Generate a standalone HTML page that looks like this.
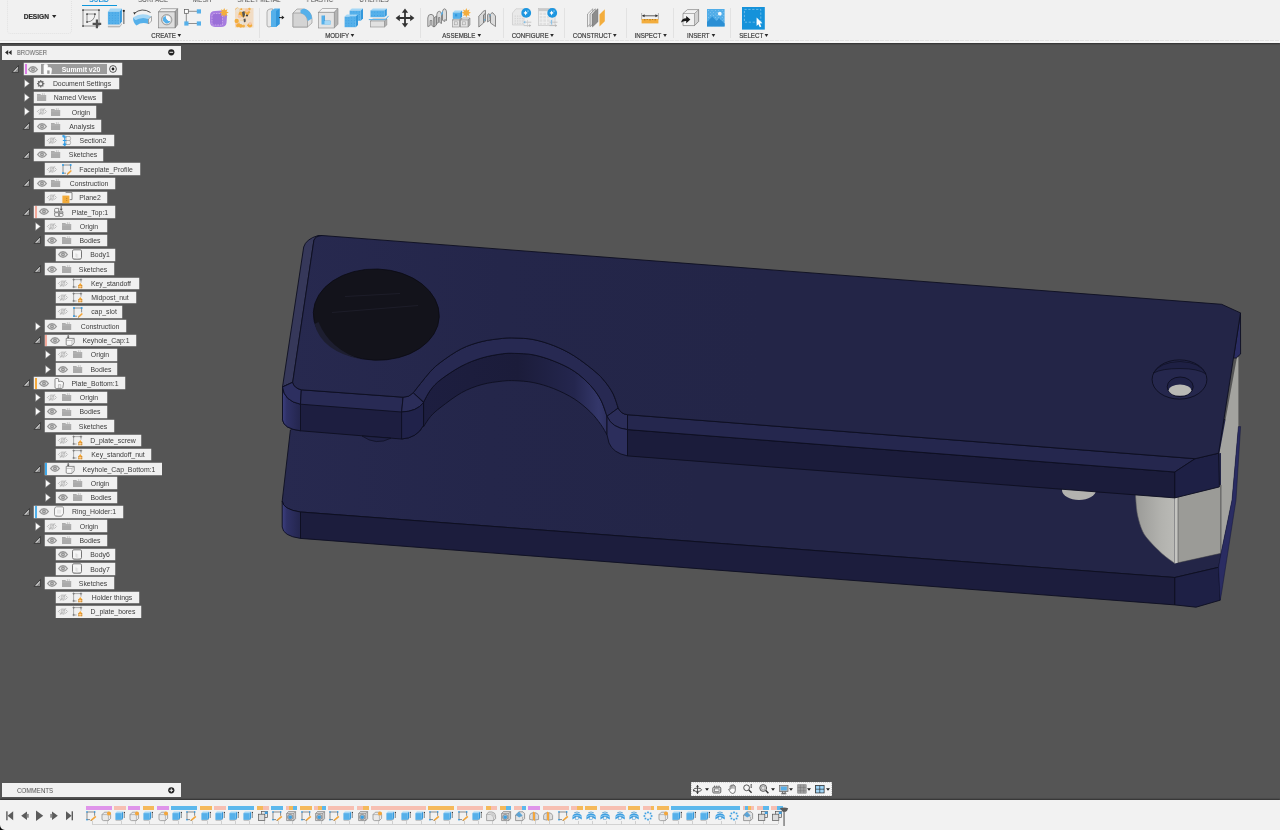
<!DOCTYPE html>
<html lang="en"><head><meta charset="utf-8"><title>Summit v20 - Design</title>
<style>
html,body{margin:0;padding:0}
body{width:1280px;height:830px;overflow:hidden;background:#555555;position:relative;font-family:"Liberation Sans",sans-serif;}
.abs{position:absolute}
svg{overflow:visible}
.tl,.rt,.ptxt,.tab{will-change:transform}
.model{position:absolute;left:0;top:0}
#topbar{position:absolute;left:0;top:0;width:1280px;height:42.8px;background:#f1f1f1;box-shadow:0 1px 1.5px rgba(0,0,0,.45)}
#bottombar{position:absolute;left:0;top:800px;width:1280px;height:30px;background:#f2f2f2;box-shadow:0 -1px 1.5px rgba(0,0,0,.45)}

.tl{-webkit-text-stroke:.2px currentColor;position:absolute;width:120px;height:10px;line-height:10px;text-align:center;white-space:nowrap}
.tli{display:inline-block;transform-origin:50% 50%}
.dd{display:inline-block;margin-left:2.2px;vertical-align:1.5px}
.tab{position:absolute;top:-4.3px;width:80px;text-align:center;font-size:7.2px;line-height:8px;white-space:nowrap;transform:scaleX(.88)}

.panel{position:absolute;background:#f1f1f1}
.ptxt{position:absolute;font-size:6.9px;line-height:10px;color:#5c5c5c;transform:scaleX(.84);transform-origin:0 50%;white-space:nowrap}
.rb{position:absolute;height:11.6px;background:#f0f0f0;box-shadow:0 0 0 .3px #d0d0d0}
.rt{position:absolute;width:100px;text-align:center;font-size:6.9px;line-height:10px;color:#3b3b3b;white-space:nowrap}
</style></head>
<body>
<svg class="model" width="1280" height="830" viewBox="0 0 1280 830">
<defs>
<linearGradient id="gTop" gradientUnits="userSpaceOnUse" x1="290" y1="0" x2="760" y2="0"><stop offset="0" stop-color="#27294f"/><stop offset="0.45" stop-color="#24264a"/><stop offset="1" stop-color="#232547"/></linearGradient>
<linearGradient id="gBot" gradientUnits="userSpaceOnUse" x1="282" y1="0" x2="700" y2="0"><stop offset="0" stop-color="#27294f"/><stop offset="0.5" stop-color="#24264a"/><stop offset="1" stop-color="#232547"/></linearGradient>
<linearGradient id="gCorner" gradientUnits="userSpaceOnUse" x1="282" y1="0" x2="301" y2="0"><stop offset="0" stop-color="#3e4182"/><stop offset="0.25" stop-color="#2f3166"/><stop offset="1" stop-color="#23254c"/></linearGradient>
<linearGradient id="gArch" gradientUnits="userSpaceOnUse" x1="423" y1="0" x2="612" y2="0"><stop offset="0" stop-color="#1d1e40"/><stop offset="0.5" stop-color="#1b1c3a"/><stop offset="0.8" stop-color="#24264e"/><stop offset="0.93" stop-color="#34376a"/><stop offset="1" stop-color="#2a2c58"/></linearGradient>
<linearGradient id="gGray" gradientUnits="userSpaceOnUse" x1="1135" y1="0" x2="1178" y2="0"><stop offset="0" stop-color="#9a9a97"/><stop offset="0.6" stop-color="#b2b2ae"/><stop offset="1" stop-color="#bcbcb8"/></linearGradient>
</defs>
<path d="M290.4 430 L282.2 501 Q282.6 509.5 300.5 512 L1174.8 577.5 L1218.6 567.3 L1232 500 L1238 430 L1200 400 L640 330 L400 330 Z" fill="url(#gBot)" stroke="#0d0e20" stroke-width="0.9" stroke-linejoin="round"/>
<path d="M282.2 501 L282.2 527 Q283 536 300.5 538.4 L300.5 512 Q283 509.5 282.2 501Z" fill="url(#gCorner)" stroke="#0d0e20" stroke-width="0.9" stroke-linejoin="round"/>
<polygon points="300.5,512.0 1174.8,577.5 1174.8,604.9 300.5,538.4" fill="#1c1d3d" stroke="#0d0e20" stroke-width="0.9" stroke-linejoin="round"/>
<polygon points="1174.8,577.5 1218.6,567.3 1220.2,600.2 1196.0,607.2 1174.8,604.9" fill="#1e2045" stroke="#0d0e20" stroke-width="0.9" stroke-linejoin="round"/>
<path d="M1135.6 494 L1135.6 497 C1135.9 500.0 1136.3 509.3 1137.5 515.0 C1138.7 520.7 1140.6 527.0 1142.6 531.3 C1144.6 535.6 1146.9 537.9 1149.5 541.0 C1152.1 544.1 1155.5 547.4 1158.3 550.1 C1161.0 552.8 1163.2 554.8 1166.0 557.0 C1168.8 559.2 1173.3 562.3 1174.8 563.4 L1174.8 495 Z" fill="url(#gGray)" stroke="#55555a" stroke-width="0.6"/>
<polygon points="1174.8,495.0 1178.0,495.0 1178.0,562.8 1174.8,563.4" fill="#c4c4c0"/>
<polygon points="1178.0,485.0 1221.0,485.0 1221.0,553.3 1178.0,562.8" fill="#9b9b97" stroke="#3c3c40" stroke-width="0.5"/>
<polygon points="1237.0,357.0 1238.4,357.0 1238.4,426.6 1232.0,500.0 1221.0,553.3 1221.0,453.0 1219.4,453.2" fill="#a3a39f"/>
<line x1="1221" y1="485" x2="1221" y2="553" stroke="#3c3c40" stroke-width="0.6"/>
<ellipse cx="1079" cy="490" rx="17" ry="10" fill="#b3b3af"/>
<polygon points="1238.4,426.6 1240.6,426.6 1236.0,500.0 1221.4,594.0 1220.2,600.2 1218.6,567.3 1221.0,553.3 1232.0,500.0" fill="#2a2c62" stroke="#15163a" stroke-width="0.5"/>
<path d="M303.7 247 Q306 239 318 235.6 L322 235.6 Q315 236.5 313.9 240.4 L292.7 382.3 L282.5 387 Z" fill="#36385a" stroke="#0d0e20" stroke-width="0.9" stroke-linejoin="round"/>
<path d="M282.5 387 L282.5 419.9 Q283.5 428.5 300.5 430.8 L401.6 439 Q417 438 423.5 425.4 L423.5 402.6 L414 393 L301 389 L292.7 382.3Z" fill="#1d1e40" stroke="#0d0e20" stroke-width="0.9" stroke-linejoin="round"/>
<path d="M282.5 387 L282.5 419.9 Q283.5 428.5 300.5 430.8 L300.5 404.2 Q284 401 282.5 387Z" fill="url(#gCorner)" stroke="#0d0e20" stroke-width="0.9" stroke-linejoin="round"/>
<path d="M282.5 387 L292.7 382.3 Q294 388 301.3 389.8 L300.5 404.2 Q284 401 282.5 387Z" fill="#2d2f60" stroke="#0d0e20" stroke-width="0.9" stroke-linejoin="round"/>
<polygon points="301.3,389.8 403.1,397.2 401.6,412.0 300.5,404.2" fill="#282a54" stroke="#0d0e20" stroke-width="0.9" stroke-linejoin="round"/>
<path d="M403.1 397.2 Q409 397.5 413.3 392.7 L423.5 402.6 Q417 411.5 401.6 412Z" fill="#2b2d59" stroke="#0d0e20" stroke-width="0.9" stroke-linejoin="round"/>
<path d="M401.6 412 Q417 411.5 423.5 402.6 L423.5 425.4 Q417 438 401.6 439Z" fill="#20224a" stroke="#0d0e20" stroke-width="0.9" stroke-linejoin="round"/>
<path d="M423.6 402.0 C424.8 399.9 427.8 393.5 430.7 389.7 C433.6 385.9 435.9 383.3 441.0 379.4 C446.1 375.5 454.7 369.7 461.5 366.1 C468.3 362.5 475.2 359.9 482.0 357.9 C488.8 355.8 497.0 354.6 502.5 353.8 C508.0 353.1 509.7 353.2 514.8 353.4 C519.9 353.6 526.7 353.5 533.2 354.8 C539.7 356.1 546.9 358.3 553.7 361.0 C560.5 363.7 568.1 367.1 574.2 371.2 C580.4 375.3 586.2 380.8 590.6 385.6 C595.0 390.4 598.1 394.8 600.8 399.9 C603.5 405.0 606.0 413.6 607.0 416.3 L607.0 434.8 C606.0 433.1 603.5 428.3 600.8 424.5 C598.1 420.7 595.0 416.5 590.6 412.2 C586.2 407.9 580.4 402.8 574.2 398.9 C568.1 395.0 560.5 391.3 553.7 388.6 C546.9 385.9 539.7 383.8 533.2 382.5 C526.7 381.2 519.9 380.9 514.8 380.7 C509.7 380.5 508.0 380.5 502.5 381.1 C497.0 381.7 488.8 382.6 482.0 384.5 C475.2 386.4 468.3 388.9 461.5 392.7 C454.7 396.5 446.1 403.2 441.0 407.1 C435.9 411.0 433.6 413.1 430.7 416.3 C427.8 419.6 424.8 424.9 423.6 426.6 Z" fill="url(#gArch)" stroke="#0d0e20" stroke-width="0.9" stroke-linejoin="round"/>
<path d="M413.3 392.7 C414.5 391.2 417.6 387.1 420.5 383.5 C423.4 379.9 427.3 374.8 430.7 371.2 C434.1 367.6 435.9 365.8 441.0 362.0 C446.1 358.2 454.7 352.1 461.5 348.7 C468.3 345.3 475.2 343.2 482.0 341.5 C488.8 339.8 497.0 339.0 502.5 338.4 C508.0 337.8 509.7 337.8 514.8 338.0 C519.9 338.2 526.7 338.2 533.2 339.5 C539.7 340.8 546.9 342.9 553.7 345.6 C560.5 348.3 567.4 351.6 574.2 355.9 C581.0 360.2 589.6 366.9 594.7 371.2 C599.8 375.5 601.8 377.7 604.9 381.5 C608.0 385.3 610.9 389.4 613.1 393.8 C615.3 398.2 617.4 405.7 618.2 408.1 L607.0 416.3 C606.0 413.6 603.5 405.0 600.8 399.9 C598.1 394.8 595.0 390.4 590.6 385.6 C586.2 380.8 580.4 375.3 574.2 371.2 C568.1 367.1 560.5 363.7 553.7 361.0 C546.9 358.3 539.7 356.1 533.2 354.8 C526.7 353.5 519.9 353.6 514.8 353.4 C509.7 353.2 508.0 353.1 502.5 353.8 C497.0 354.6 488.8 355.8 482.0 357.9 C475.2 359.9 468.3 362.5 461.5 366.1 C454.7 369.7 446.1 375.5 441.0 379.4 C435.9 383.3 433.6 385.9 430.7 389.7 C427.8 393.5 424.8 399.9 423.6 402.0 Z" fill="#272952" stroke="#0d0e20" stroke-width="0.9" stroke-linejoin="round"/>
<path d="M618.2 408.1 Q621 414 627.5 414.7 L627.5 429.6 Q612 428 607 416.3Z" fill="#2b2d59" stroke="#0d0e20" stroke-width="0.9" stroke-linejoin="round"/>
<path d="M607 416.3 Q612 428 627.5 429.6 L627.5 455.9 Q613 453 609 443 L607 434.8Z" fill="#2c2e5c" stroke="#0d0e20" stroke-width="0.9" stroke-linejoin="round"/>
<polygon points="627.5,429.6 1174.8,472.0 1174.8,497.9 627.5,455.9" fill="#1b1c3b" stroke="#0d0e20" stroke-width="0.9" stroke-linejoin="round"/>
<polygon points="627.5,414.7 1195.1,458.7 1174.8,472.0 627.5,429.6" fill="#25274e" stroke="#0d0e20" stroke-width="0.9" stroke-linejoin="round"/>
<polygon points="1174.8,472.0 1195.1,458.7 1218.6,453.2 1219.4,486.9 1174.8,497.9" fill="#1e2045" stroke="#0d0e20" stroke-width="0.9" stroke-linejoin="round"/>
<polygon points="1240.5,312.9 1240.6,354.0 1236.3,358.0 1233.5,358.0" fill="#2a2c62" stroke="#0d0e20" stroke-width="0.9" stroke-linejoin="round"/>
<path d="M313.9 240.4 Q315 236.2 322 235.5 L1221.7 304.3 L1240.5 312.9 L1218.6 453.2 L1195.1 458.7 L627.5 414.7 Q621 414 618.2 408.1 C617.4 405.7 615.3 398.2 613.1 393.8 C610.9 389.4 608.0 385.3 604.9 381.5 C601.8 377.7 599.8 375.5 594.7 371.2 C589.6 366.9 581.0 360.2 574.2 355.9 C567.4 351.6 560.5 348.3 553.7 345.6 C546.9 342.9 539.7 340.8 533.2 339.5 C526.7 338.2 519.9 338.2 514.8 338.0 C509.7 337.8 508.0 337.8 502.5 338.4 C497.0 339.0 488.8 339.8 482.0 341.5 C475.2 343.2 468.3 345.3 461.5 348.7 C454.7 352.1 446.1 358.2 441.0 362.0 C435.9 365.8 434.1 367.6 430.7 371.2 C427.3 374.8 423.4 379.9 420.5 383.5 C417.6 387.1 414.5 391.2 413.3 392.7 Q409 397.5 403.1 397.2 L301.3 389.8 Q294 388 292.7 382.3 Z" fill="url(#gTop)" stroke="#0d0e20" stroke-width="0.9" stroke-linejoin="round"/>
<ellipse cx="376.3" cy="314.6" rx="63" ry="45.6" transform="rotate(2 376.3 314.6)" fill="#13131b" stroke="#0b0b14" stroke-width="0.8"/>
<path d="M314.5 324 Q322 352 362 359.5 Q330 350 318.5 322Z" fill="#1d1e30"/>
<path d="M332 312.5 L418 305.5 M345 296.5 L400 293.5" stroke="#20202c" stroke-width=".8" fill="none"/>
<ellipse cx="1179.5" cy="379.5" rx="27.4" ry="19.6" fill="#25274d" stroke="#0d0e20" stroke-width="0.9"/>
<path d="M1153.5 373 Q1160 362 1180 361.5 Q1200 362 1206 374 Q1198 368.5 1180 368.5 Q1162 368.5 1153.5 373Z" fill="#1e2044" stroke="#0d0e20" stroke-width="0.7"/>
<ellipse cx="1180.2" cy="386.8" rx="13" ry="9.8" fill="#1f2146" stroke="#0d0e20" stroke-width="0.9"/>
<ellipse cx="1180" cy="390.2" rx="11.3" ry="5.6" fill="#b9b9b5"/>
<path d="M362 436 Q376 446 391 438.2Z" fill="#1f2145" stroke="#0d0e20" stroke-width="0.7"/>
</svg>
<div id="topbar">
<div class="abs" style="left:7px;top:-4px;width:65px;height:38px;border:1px dotted #e2e2e2;border-radius:4px;box-sizing:border-box"></div>
<div class="tl" style="left:-20px;top:12px;font-size:6.6px;color:#2e2e2e;font-weight:bold"><span class="tli" style="transform:scaleX(1)">DESIGN<svg class="dd" style="margin-left:3px" width="4.4" height="3" viewBox="0 0 4.4 3"><path d="M0 .1 H4.4 L2.2 2.9Z" fill="#2a2a2a"/></svg></span></div>
<div class="tab" style="left:58.8px;color:#1a93dc;font-weight:bold">SOLID</div>
<div class="tab" style="left:112.8px;color:#4a4a4a;font-weight:normal">SURFACE</div>
<div class="tab" style="left:162.4px;color:#4a4a4a;font-weight:normal">MESH</div>
<div class="tab" style="left:218.5px;color:#4a4a4a;font-weight:normal">SHEET METAL</div>
<div class="tab" style="left:280.3px;color:#4a4a4a;font-weight:normal">PLASTIC</div>
<div class="tab" style="left:333.8px;color:#4a4a4a;font-weight:normal">UTILITIES</div>
<div class="abs" style="left:82.1px;top:4.6px;width:35.4px;height:1.7px;background:#0d96db"></div>
<svg class="abs" style="left:81.5px;top:8.5px" width="20" height="20" viewBox="0 0 20 20"><rect x="1" y="1" width="16" height="16" fill="none" stroke="#4a4a4a" stroke-width=".6"/><path d="M5 5 H13 Q12.5 12.5 5 13Z" fill="none" stroke="#4a4a4a" stroke-width=".6"/><circle cx="1" cy="1" r="0.85" fill="#2b2b2b"/><circle cx="17" cy="1" r="0.85" fill="#2b2b2b"/><circle cx="1" cy="17" r="0.85" fill="#2b2b2b"/><circle cx="5" cy="5" r="0.85" fill="#2b2b2b"/><circle cx="13" cy="5" r="0.85" fill="#2b2b2b"/><circle cx="5" cy="13" r="0.85" fill="#2b2b2b"/><path d="M14.9 10.6 v8.6 M10.6 14.9 h8.6" stroke="#505050" stroke-width="2.2" fill="none"/></svg>
<svg class="abs" style="left:107px;top:7.5px" width="19" height="20" viewBox="0 0 19 20"><polygon points="0.9,16 14.9,16 14.9,13 12.7,19.2 0.9,19.2" fill="#e2e2e2"/><polygon points="0.9,18.2 12.7,18.2 14.9,15.6 14.9,16.6 12.7,19.3 0.9,19.3" fill="#a9a9a9"/><polygon points="0.9,3.7 3.2,0.6 14.9,0.6 12.6,3.7" fill="#a4d7f6"/><polygon points="12.6,3.7 14.9,0.6 14.9,13.4 12.6,16.5" fill="#3398dc"/><rect x="0.9" y="3.7" width="11.7" height="12.8" fill="#55b0ea"/><circle cx="2.36" cy="4.98" r=".42" fill="#2f93dc"/><circle cx="2.36" cy="7.54" r=".42" fill="#2f93dc"/><circle cx="2.36" cy="10.10" r=".42" fill="#2f93dc"/><circle cx="2.36" cy="12.66" r=".42" fill="#2f93dc"/><circle cx="2.36" cy="15.22" r=".42" fill="#2f93dc"/><circle cx="5.29" cy="4.98" r=".42" fill="#2f93dc"/><circle cx="5.29" cy="7.54" r=".42" fill="#2f93dc"/><circle cx="5.29" cy="10.10" r=".42" fill="#2f93dc"/><circle cx="5.29" cy="12.66" r=".42" fill="#2f93dc"/><circle cx="5.29" cy="15.22" r=".42" fill="#2f93dc"/><circle cx="8.21" cy="4.98" r=".42" fill="#2f93dc"/><circle cx="8.21" cy="7.54" r=".42" fill="#2f93dc"/><circle cx="8.21" cy="10.10" r=".42" fill="#2f93dc"/><circle cx="8.21" cy="12.66" r=".42" fill="#2f93dc"/><circle cx="8.21" cy="15.22" r=".42" fill="#2f93dc"/><circle cx="11.14" cy="4.98" r=".42" fill="#2f93dc"/><circle cx="11.14" cy="7.54" r=".42" fill="#2f93dc"/><circle cx="11.14" cy="10.10" r=".42" fill="#2f93dc"/><circle cx="11.14" cy="12.66" r=".42" fill="#2f93dc"/><circle cx="11.14" cy="15.22" r=".42" fill="#2f93dc"/><line x1="16.8" y1="3" x2="16.8" y2="16" stroke="#8a8a8a" stroke-width="1.5"/><circle cx="16.8" cy="2.8" r="1.1" fill="#222"/></svg>
<svg class="abs" style="left:132px;top:8.3px" width="20.5" height="18.5" viewBox="0 0 20.5 18.5"><path d="M2 5.5 Q10 -1 18.5 4.5" fill="none" stroke="#444" stroke-width=".9"/><path d="M1.2 4.3 l2.6 .2 l-1.3 2.2z" fill="#333"/><path d="M1 9.5 Q10 3.5 19.5 8.5 L16.5 11 Q10 8.5 3.5 12Z" fill="#a4d7f6"/><path d="M1 9.5 L3.5 12 Q10 8.5 16.5 11 L16.5 16 Q10 13.5 4.5 17.5 Q1 15 1 9.5Z" fill="#55b0ea"/><path d="M16.5 11 L19.5 8.5 L19.5 13 L16.5 16Z" fill="#f3f3f3" stroke="#777" stroke-width=".6"/></svg>
<svg class="abs" style="left:157.6px;top:7.6px" width="20" height="20.5" viewBox="0 0 20 20.5"><polygon points="0.6,3.9 3.2,0.7 19.6,0.7 17,3.9" fill="#f2f2f2" stroke="#777" stroke-width=".6"/><polygon points="17,3.9 19.6,0.7 19.6,16.7 17,19.9" fill="#a9a9a9" stroke="#777" stroke-width=".6"/><rect x="0.6" y="3.9" width="16.4" height="16" fill="#dedede" stroke="#777" stroke-width=".6"/><circle cx="8.7" cy="11.7" r="5.2" fill="#c9c9c9" stroke="#8a8a8a" stroke-width=".7"/><circle cx="8.7" cy="11.7" r="3.9" fill="#fafafa"/><path d="M5.4 9.6 A3.9 3.9 0 0 0 12.3 13.2 A4.6 4.6 0 0 1 7.6 8Z" fill="#55b0ea"/><path d="M5.4 9.6 A3.9 3.9 0 0 0 12.3 13.2 A4.6 4.6 0 0 1 7.6 8Z" fill="#55b0ea"/></svg>
<svg class="abs" style="left:183.6px;top:9.3px" width="17.5" height="17.5" viewBox="0 0 17.5 17.5"><path d="M2.3 2.3 H15 M2.3 2.3 V14.5 M2.3 14.5 H15" stroke="#666" stroke-width=".7" fill="none"/><rect x=".5" y=".5" width="3.8" height="3.8" fill="#fff" stroke="#555" stroke-width=".7"/><rect x="12.8" y=".3" width="4.2" height="4.2" fill="#55b0ea"/><rect x=".3" y="12.4" width="4.2" height="4.2" fill="#55b0ea"/><rect x="12.8" y="12.4" width="4.2" height="4.2" fill="#55b0ea"/></svg>
<svg class="abs" style="left:208.6px;top:8px" width="20" height="20" viewBox="0 0 20 20"><path d="M1 8 Q1 3 6 3 L13 2.5 Q17.5 3 18 8 L17.5 15 Q17 19 12 19 L6 19 Q1 18.5 1 14Z" fill="#a77de0"/><path d="M3 8 Q3 5.5 6 5.5 L11.5 5.5 Q13.5 5.5 13.5 8 V17 H3Z" fill="#9a6fd8" stroke="#d9b3ee" stroke-width=".7" stroke-dasharray="1.6 1"/><polygon points="19.8,4.6 17.5,5.6 18.5,7.9 16.2,6.9 15.2,9.2 14.2,6.9 11.9,7.9 12.9,5.6 10.6,4.6 12.9,3.6 11.9,1.3 14.2,2.3 15.2,0.0 16.2,2.3 18.5,1.3 17.5,3.6" fill="#f3ad3d"/></svg>
<svg class="abs" style="left:234.8px;top:8.2px" width="18.5" height="19.5" viewBox="0 0 18.5 19.5"><rect x="0" y="0" width="18.5" height="19.5" fill="#f1dcc4"/><circle cx="4.8" cy="2.8" r="1.4" fill="#f3ad3d"/><circle cx="2.4" cy="1.3" r="1.7" fill="#f3ad3d"/><circle cx="13.8" cy="14.0" r="1.2" fill="#e9e1d5"/><circle cx="6.8" cy="14.3" r="2.1" fill="#f3ad3d"/><circle cx="4.4" cy="16.8" r="2.1" fill="#f3ad3d"/><circle cx="13.8" cy="4.3" r="1.3" fill="#f0b04a"/><circle cx="14.9" cy="17.3" r="2.2" fill="#f3ad3d"/><circle cx="2.4" cy="11.3" r="1.9" fill="#e9e1d5"/><circle cx="5.0" cy="5.2" r="1.2" fill="#e9e1d5"/><circle cx="14.4" cy="1.1" r="1.3" fill="#f0b04a"/><circle cx="15.1" cy="15.4" r="1.6" fill="#f6c8a8"/><circle cx="7.8" cy="5.9" r="1.5" fill="#f3ad3d"/><circle cx="5.9" cy="14.8" r="0.9" fill="#f3ad3d"/><circle cx="8.4" cy="18.0" r="1.6" fill="#f0b04a"/><circle cx="8.5" cy="6.8" r="2.4" fill="#f3ad3d"/><circle cx="2.1" cy="16.5" r="1.8" fill="#f6c8a8"/><circle cx="5.4" cy="7.0" r="2.0" fill="#f3ad3d"/><circle cx="11.2" cy="4.4" r="1.3" fill="#f3ad3d"/><circle cx="12.3" cy="5.7" r="1.7" fill="#f3ad3d"/><circle cx="3.0" cy="16.9" r="1.3" fill="#f3ad3d"/><circle cx="1.7" cy="12.9" r="2.2" fill="#f3ad3d"/><circle cx="12.8" cy="17.3" r="0.8" fill="#f3ad3d"/><circle cx="6.1" cy="3.6" r="1.8" fill="#e9e1d5"/><circle cx="11.9" cy="2.3" r="1.8" fill="#f6c8a8"/><circle cx="5.7" cy="5.3" r="1.8" fill="#f3ad3d"/><circle cx="6.3" cy="1.2" r="0.9" fill="#f3ad3d"/><circle cx="6.8" cy="14.7" r="2.4" fill="#e9e1d5"/><circle cx="2.6" cy="17.7" r="1.5" fill="#f3ad3d"/><circle cx="2.8" cy="2.1" r="2.0" fill="#e9e1d5"/><circle cx="11.8" cy="3.5" r="0.9" fill="#f6c8a8"/><circle cx="10.3" cy="6.5" r="0.9" fill="#e9e1d5"/><circle cx="5.7" cy="17.9" r="1.8" fill="#f3ad3d"/><circle cx="8.6" cy="5.1" r="1.5" fill="#f3ad3d"/><circle cx="4.5" cy="8.5" r="1.8" fill="#f6c8a8"/><path d="M7 4 l2.5 -1 l.5 4 l-2 3z M8.5 11 l2-.6 l.3 3 l-1.8 1z" fill="#555"/><circle cx="12" cy="7.5" r="1.1" fill="#444"/></svg>
<svg class="abs" style="left:266.4px;top:8px" width="19" height="20" viewBox="0 0 19 20"><path d="M1 4 Q1 1.5 4 1 L6.5 .8 V18 L3 19 Q1 19 1 17Z" fill="#e9e9e9" stroke="#888" stroke-width=".6"/><polygon points="5,3 8.5,.6 13.6,.6 13.6,16 10,19 5,19" fill="#55b0ea"/><polygon points="10,3 13.6,.6 13.6,16 10,19" fill="#3398dc"/><path d="M13 9.6 h3.6" stroke="#222" stroke-width="1"/><path d="M15.8 7.6 l2.6 2 l-2.6 2z" fill="#222"/></svg>
<svg class="abs" style="left:291.6px;top:8px" width="20.5" height="20" viewBox="0 0 20.5 20"><path d="M1 5 L5 1 H12 Q19.5 3 20 11 V15 L15.5 19 H1Z" fill="#e2e2e2" stroke="#8a8a8a" stroke-width=".6"/><path d="M1 5 H9 Q15 6.5 15.5 13 V19 H1Z" fill="#d4d4d4" stroke="#8a8a8a" stroke-width=".6"/><path d="M8.5 2.2 Q11 .4 13 .8 Q19.6 3 20 10.5 L15.8 13 Q15 6.8 8.5 5Z" fill="#55b0ea"/></svg>
<svg class="abs" style="left:317.6px;top:7.8px" width="20.5" height="20.5" viewBox="0 0 20.5 20.5"><polygon points="0.5,4.3 4.3,0.5 20,0.5 16.2,4.3" fill="#f4f4f4" stroke="#8a8a8a" stroke-width=".6"/><polygon points="16.2,4.3 20,0.5 20,16.2 16.2,20" fill="#b4b4b4" stroke="#8a8a8a" stroke-width=".6"/><rect x="0.5" y="4.3" width="15.7" height="15.7" fill="#e4e4e4" stroke="#8a8a8a" stroke-width=".6"/><path d="M3.5 7.5 H6.5 V13 H12.5 V16.5 H3.5Z" fill="#55b0ea"/><path d="M6.5 7.5 V13 H12.5" fill="none" stroke="#3398dc" stroke-width=".7"/><rect x="6.5" y="13" width="6" height="3.5" fill="#a4d7f6"/></svg>
<svg class="abs" style="left:343.5px;top:8px" width="20" height="20" viewBox="0 0 20 20"><polygon points="5.6,2.6 7.8,0.4 19,0.4 16.8,2.6" fill="#a4d7f6"/><polygon points="16.8,2.6 19,0.4 19,10.6 16.8,12.8" fill="#3398dc"/><rect x="5.6" y="2.6" width="11.2" height="10.2" fill="#55b0ea"/><circle cx="7.00" cy="3.88" r=".42" fill="#2f93dc"/><circle cx="7.00" cy="6.42" r=".42" fill="#2f93dc"/><circle cx="7.00" cy="8.97" r=".42" fill="#2f93dc"/><circle cx="7.00" cy="11.52" r=".42" fill="#2f93dc"/><circle cx="9.80" cy="3.88" r=".42" fill="#2f93dc"/><circle cx="9.80" cy="6.42" r=".42" fill="#2f93dc"/><circle cx="9.80" cy="8.97" r=".42" fill="#2f93dc"/><circle cx="9.80" cy="11.52" r=".42" fill="#2f93dc"/><circle cx="12.60" cy="3.88" r=".42" fill="#2f93dc"/><circle cx="12.60" cy="6.42" r=".42" fill="#2f93dc"/><circle cx="12.60" cy="8.97" r=".42" fill="#2f93dc"/><circle cx="12.60" cy="11.52" r=".42" fill="#2f93dc"/><circle cx="15.40" cy="3.88" r=".42" fill="#2f93dc"/><circle cx="15.40" cy="6.42" r=".42" fill="#2f93dc"/><circle cx="15.40" cy="8.97" r=".42" fill="#2f93dc"/><circle cx="15.40" cy="11.52" r=".42" fill="#2f93dc"/><polygon points="0.6,8.6 2.8,6.4 14,6.4 11.8,8.6" fill="#a4d7f6"/><polygon points="11.8,8.6 14,6.4 14,17 11.8,19.2" fill="#3398dc"/><rect x="0.6" y="8.6" width="11.2" height="10.6" fill="#55b0ea"/><circle cx="2.00" cy="9.93" r=".42" fill="#2f93dc"/><circle cx="2.00" cy="12.58" r=".42" fill="#2f93dc"/><circle cx="2.00" cy="15.23" r=".42" fill="#2f93dc"/><circle cx="2.00" cy="17.88" r=".42" fill="#2f93dc"/><circle cx="4.80" cy="9.93" r=".42" fill="#2f93dc"/><circle cx="4.80" cy="12.58" r=".42" fill="#2f93dc"/><circle cx="4.80" cy="15.23" r=".42" fill="#2f93dc"/><circle cx="4.80" cy="17.88" r=".42" fill="#2f93dc"/><circle cx="7.60" cy="9.93" r=".42" fill="#2f93dc"/><circle cx="7.60" cy="12.58" r=".42" fill="#2f93dc"/><circle cx="7.60" cy="15.23" r=".42" fill="#2f93dc"/><circle cx="7.60" cy="17.88" r=".42" fill="#2f93dc"/><circle cx="10.40" cy="9.93" r=".42" fill="#2f93dc"/><circle cx="10.40" cy="12.58" r=".42" fill="#2f93dc"/><circle cx="10.40" cy="15.23" r=".42" fill="#2f93dc"/><circle cx="10.40" cy="17.88" r=".42" fill="#2f93dc"/></svg>
<svg class="abs" style="left:369px;top:8px" width="19.5" height="20" viewBox="0 0 19.5 20"><polygon points="1.5,13 3.9,11 17.8,11 15.4,13" fill="#f3f3f3" stroke="#8a8a8a" stroke-width=".6"/><polygon points="15.4,13 17.8,11 17.8,17 15.4,19" fill="#b3b3b3" stroke="#8a8a8a" stroke-width=".6"/><rect x="1.5" y="13" width="13.9" height="6" fill="#e1e1e1" stroke="#8a8a8a" stroke-width=".6"/><polygon points="1.5,2.4 3.9,0.4 17.8,0.4 15.4,2.4" fill="#a4d7f6"/><polygon points="15.4,2.4 17.8,0.4 17.8,7.2 15.4,9.2" fill="#3398dc"/><rect x="1.5" y="2.4" width="13.9" height="6.8" fill="#55b0ea"/><circle cx="2.89" cy="4.10" r=".42" fill="#2f93dc"/><circle cx="2.89" cy="7.50" r=".42" fill="#2f93dc"/><circle cx="5.67" cy="4.10" r=".42" fill="#2f93dc"/><circle cx="5.67" cy="7.50" r=".42" fill="#2f93dc"/><circle cx="8.45" cy="4.10" r=".42" fill="#2f93dc"/><circle cx="8.45" cy="7.50" r=".42" fill="#2f93dc"/><circle cx="11.23" cy="4.10" r=".42" fill="#2f93dc"/><circle cx="11.23" cy="7.50" r=".42" fill="#2f93dc"/><circle cx="14.01" cy="4.10" r=".42" fill="#2f93dc"/><circle cx="14.01" cy="7.50" r=".42" fill="#2f93dc"/><path d="M-.2 11.6 L16.4 11.6 L19.6 7.9" stroke="#55b0ea" stroke-width="1" fill="none"/></svg>
<svg class="abs" style="left:395.5px;top:8.7px" width="18" height="18" viewBox="0 0 18 18"><path d="M9 2 V16 M2 9 H16" stroke="#333" stroke-width="1.8"/><path d="M9 -.4 l3.2 4.2 h-6.4z M9 18.4 l3.2 -4.2 h-6.4z M-.4 9 l4.2 -3.2 v6.4z M18.4 9 l-4.2 -3.2 v6.4z" fill="#333"/></svg>
<svg class="abs" style="left:426.6px;top:8px" width="20.5" height="20" viewBox="0 0 20.5 20"><path d="M.8 10 Q.8 6.5 4 6.3 Q7 6.5 7 10 V19 L4.8 17.5 V12.5 H3.2 V17.5 L.8 18.6Z" fill="#dcdcdc" stroke="#707070" stroke-width=".8"/><path d="M7 10 L9.5 8 V17 L7 19Z" fill="#b9b9b9" stroke="#707070" stroke-width=".8"/><path d="M9.8 6.5 Q10 3.5 12.3 3.3 Q14.5 3.5 14.5 6.5 V15.5 L12.8 14.5 V9.5 H11.6 V14.5 L9.8 15.4Z" fill="#dcdcdc" stroke="#707070" stroke-width=".8"/><path d="M15.5 3.8 Q15.8 1 17.5 .8 Q19.4 1 19.5 4 V12.5 L17.8 11.6 V13.5 L15.5 12.3Z" fill="#dcdcdc" stroke="#707070" stroke-width=".8"/><path d="M14.2 5.2 l1.6 -2.4 v2.8 l-1.6 2.4z" fill="#55b0ea"/></svg>
<svg class="abs" style="left:452px;top:7.6px" width="19.5" height="20" viewBox="0 0 19.5 20"><polygon points="0.5,12 2.5,10 9.5,10 7.5,12" fill="#f0f0f0" stroke="#8a8a8a" stroke-width=".6"/><polygon points="7.5,12 9.5,10 9.5,17 7.5,19" fill="#b5b5b5" stroke="#8a8a8a" stroke-width=".6"/><rect x="0.5" y="12" width="7" height="7" fill="#e3e3e3" stroke="#8a8a8a" stroke-width=".6"/><polygon points="8.5,12 10.5,10 18,10 16,12" fill="#f0f0f0" stroke="#8a8a8a" stroke-width=".6"/><polygon points="16,12 18,10 18,17 16,19" fill="#b5b5b5" stroke="#8a8a8a" stroke-width=".6"/><rect x="8.5" y="12" width="7.5" height="7" fill="#e3e3e3" stroke="#8a8a8a" stroke-width=".6"/><rect x="2.6" y="13.8" width="3" height="3" fill="none" stroke="#a5a5a5" stroke-width=".6"/><rect x="10.6" y="13.8" width="3" height="3" fill="none" stroke="#a5a5a5" stroke-width=".6"/><polygon points="0.8,4.5 2.8,2.5 10.1,2.5 8.1,4.5" fill="#a4d7f6"/><polygon points="8.1,4.5 10.1,2.5 10.1,8.8 8.1,10.8" fill="#3398dc"/><rect x="0.8" y="4.5" width="7.3" height="6.3" fill="#55b0ea"/><rect x="3" y="6.2" width="2.2" height="2.2" fill="#3398dc"/><polygon points="19.0,4.8 16.7,5.8 17.6,8.1 15.3,7.2 14.3,9.5 13.3,7.2 11.0,8.1 11.9,5.8 9.6,4.8 11.9,3.8 11.0,1.5 13.3,2.4 14.3,0.1 15.3,2.4 17.6,1.5 16.7,3.8" fill="#f3ad3d"/></svg>
<svg class="abs" style="left:478.4px;top:8px" width="18.5" height="20" viewBox="0 0 18.5 20"><path d="M.8 8 L3 6 Q5 2.5 7.5 2.3 V5.5 L5.5 7 V15 L.8 19Z" fill="#d9d9d9" stroke="#707070" stroke-width=".8"/><path d="M5.5 7 L7.5 5.5 V13 L5.5 15Z" fill="#b5b5b5" stroke="#707070" stroke-width=".7"/><path d="M9.5 7 Q10 5 11.5 6 L12.5 12 L9.5 14Z" fill="#c9c9c9" stroke="#707070" stroke-width=".7"/><path d="M12.5 6.5 Q14 3.5 15 5 L17.5 8 V18.5 L12.5 15Z" fill="#dcdcdc" stroke="#707070" stroke-width=".8"/><path d="M6 11.6 l1.2 -.9 v1.3 l-1.2 .9z M11.6 7.5 l.9 -1.6 v1.7 l-.9 1.6z" fill="#55b0ea"/></svg>
<svg class="abs" style="left:511.6px;top:8px" width="19.6" height="20" viewBox="0 0 19.6 20"><path d="M.5 5 L4 .8 H12 V17 H.5Z" fill="#e9e9e9" stroke="#c4c4c4" stroke-width=".6"/><rect x="2.6" y="7.5" width="1.3" height="1.3" fill="#d6d6d6"/><rect x="2.6" y="9.9" width="1.3" height="1.3" fill="#d6d6d6"/><rect x="2.6" y="12.3" width="1.3" height="1.3" fill="#d6d6d6"/><rect x="2.6" y="14.7" width="1.3" height="1.3" fill="#d6d6d6"/><rect x="5" y="7.5" width="1.3" height="1.3" fill="#d6d6d6"/><rect x="5" y="9.9" width="1.3" height="1.3" fill="#d6d6d6"/><rect x="5" y="12.3" width="1.3" height="1.3" fill="#d6d6d6"/><rect x="5" y="14.7" width="1.3" height="1.3" fill="#d6d6d6"/><rect x="7.4" y="7.5" width="1.3" height="1.3" fill="#d6d6d6"/><rect x="7.4" y="9.9" width="1.3" height="1.3" fill="#d6d6d6"/><rect x="7.4" y="12.3" width="1.3" height="1.3" fill="#d6d6d6"/><rect x="7.4" y="14.7" width="1.3" height="1.3" fill="#d6d6d6"/><rect x="9.8" y="7.5" width="1.3" height="1.3" fill="#d6d6d6"/><rect x="9.8" y="9.9" width="1.3" height="1.3" fill="#d6d6d6"/><rect x="9.8" y="12.3" width="1.3" height="1.3" fill="#d6d6d6"/><rect x="9.8" y="14.7" width="1.3" height="1.3" fill="#d6d6d6"/><circle cx="14.2" cy="4.9" r="4.9" fill="#1d96e0"/><path d="M13.6 2.6 q.4 2 2.2 2.4 q-1.8 .4 -2.2 2.4 q-.4 -2 -2.2 -2.4 q1.8 -.4 2.2 -2.4z" fill="#fff"/><circle cx="16" cy="3" r=".6" fill="#fff"/><path d="M12.3 14.2 h7 M11.8 17.6 h6.6" stroke="#b5b5b5" stroke-width=".7"/><path d="M11.3 14.2 l2 -1.4 v2.8z" fill="#79bdec"/><path d="M19.2 17.6 l-2 -1.4 v2.8z" fill="#b5b5b5"/><path d="M15.5 12 v7" stroke="#c8c8c8" stroke-width=".6"/></svg>
<svg class="abs" style="left:537.6px;top:8px" width="19.6" height="20" viewBox="0 0 19.6 20"><rect x=".5" y=".6" width="16.5" height="17" fill="#f0f0f0" stroke="#bdbdbd" stroke-width=".6"/><rect x=".5" y=".6" width="16.5" height="2.6" fill="#c9c9c9"/><rect x="1.6" y="4.6" width="2.7" height="2.4" fill="#e0e0e0"/><rect x="1.6" y="8" width="2.7" height="2.4" fill="#e0e0e0"/><rect x="1.6" y="11.4" width="2.7" height="2.4" fill="#e0e0e0"/><rect x="1.6" y="14.8" width="2.7" height="2.4" fill="#e0e0e0"/><rect x="5.3" y="4.6" width="2.7" height="2.4" fill="#e0e0e0"/><rect x="5.3" y="8" width="2.7" height="2.4" fill="#e0e0e0"/><rect x="5.3" y="11.4" width="2.7" height="2.4" fill="#e0e0e0"/><rect x="5.3" y="14.8" width="2.7" height="2.4" fill="#e0e0e0"/><rect x="9" y="4.6" width="2.7" height="2.4" fill="#e0e0e0"/><rect x="9" y="8" width="2.7" height="2.4" fill="#e0e0e0"/><rect x="9" y="11.4" width="2.7" height="2.4" fill="#e0e0e0"/><rect x="9" y="14.8" width="2.7" height="2.4" fill="#e0e0e0"/><rect x="12.7" y="4.6" width="2.7" height="2.4" fill="#e0e0e0"/><rect x="12.7" y="8" width="2.7" height="2.4" fill="#e0e0e0"/><rect x="12.7" y="11.4" width="2.7" height="2.4" fill="#e0e0e0"/><rect x="12.7" y="14.8" width="2.7" height="2.4" fill="#e0e0e0"/><circle cx="14.2" cy="4.9" r="4.9" fill="#1d96e0"/><path d="M13.6 2.6 q.4 2 2.2 2.4 q-1.8 .4 -2.2 2.4 q-.4 -2 -2.2 -2.4 q1.8 -.4 2.2 -2.4z" fill="#fff"/><circle cx="16" cy="3" r=".6" fill="#fff"/><path d="M11.5 14.2 h8 M11.5 17.6 h7" stroke="#b5b5b5" stroke-width=".7"/><path d="M13.4 12 v4.5" stroke="#79bdec" stroke-width=".9"/><path d="M19.2 17.6 l-2 -1.4 v2.8z" fill="#b5b5b5"/></svg>
<svg class="abs" style="left:586.6px;top:8px" width="18.5" height="19.5" viewBox="0 0 18.5 19.5"><polygon points="0.5,6 5.8,.8 5.8,13.8 .5,18.8" fill="#f0f0f0" stroke="#777" stroke-width=".6"/><polygon points="3,6 8.3,.8 8.3,13.8 3,18.8" fill="#dadada" stroke="#777" stroke-width=".6"/><polygon points="5.5,6 10.8,.8 10.8,13.8 5.5,18.8" fill="#8d8d8d" stroke="#666" stroke-width=".6"/><polygon points="12.5,6.5 17.8,1.2 17.8,13.2 12.5,18.5" fill="#f3ad3d"/></svg>
<svg class="abs" style="left:641px;top:11.8px" width="18" height="12" viewBox="0 0 18 12"><path d="M.6 1 v6.6 M17.4 1 v6.6" stroke="#9a9a9a" stroke-width=".7"/><path d="M1.5 3.8 h15" stroke="#333" stroke-width=".8"/><path d="M1 3.8 l2.6 -1.5 v3z M17 3.8 l-2.6 -1.5 v3z" fill="#333"/><rect x=".6" y="7" width="16.8" height="4.4" fill="#f3ad3d"/><path d="M3.8 7 v1.4 M6.2 7 v1 M9 7 v1.4 M11.6 7 v1 M14.2 7 v1.4" stroke="#6b4a10" stroke-width=".6"/></svg>
<svg class="abs" style="left:680.8px;top:9px" width="18.4" height="17.4" viewBox="0 0 18.4 17.4"><polygon points="2,4.5 6.5,.6 17.6,.6 17.6,12.5 13.5,16.6 2,16.6" fill="#f2f2f2" stroke="#6e6e6e" stroke-width=".6"/><polygon points="13.5,4.5 17.6,.6 17.6,12.5 13.5,16.6" fill="#d2d2d2" stroke="#6e6e6e" stroke-width=".5"/><path d="M2 4.5 H13.5" stroke="#6e6e6e" stroke-width=".5"/><path d="M0 13.6 Q.8 9.2 5.2 9.2 V7 L9.4 10.6 L5.2 14.2 V12 Q2 11.8 0 13.6Z" fill="#1a1a1a"/></svg>
<svg class="abs" style="left:706.5px;top:9px" width="17.6" height="17.4" viewBox="0 0 17.6 17.4"><rect x="0" y="0" width="17.6" height="17.4" fill="#51ade8"/><circle cx="1.6" cy="1.6" r=".35" fill="#d7ecfa"/><circle cx="1.6" cy="5" r=".35" fill="#d7ecfa"/><circle cx="1.6" cy="8.4" r=".35" fill="#d7ecfa"/><circle cx="1.6" cy="11.8" r=".35" fill="#d7ecfa"/><circle cx="1.6" cy="15.2" r=".35" fill="#d7ecfa"/><circle cx="3.3" cy="3.3" r=".35" fill="#d7ecfa"/><circle cx="3.3" cy="6.7" r=".35" fill="#d7ecfa"/><circle cx="3.3" cy="10.1" r=".35" fill="#d7ecfa"/><circle cx="3.3" cy="13.5" r=".35" fill="#d7ecfa"/><circle cx="3.3" cy="16.9" r=".35" fill="#d7ecfa"/><circle cx="5" cy="1.6" r=".35" fill="#d7ecfa"/><circle cx="5" cy="5" r=".35" fill="#d7ecfa"/><circle cx="5" cy="8.4" r=".35" fill="#d7ecfa"/><circle cx="5" cy="11.8" r=".35" fill="#d7ecfa"/><circle cx="5" cy="15.2" r=".35" fill="#d7ecfa"/><circle cx="6.7" cy="3.3" r=".35" fill="#d7ecfa"/><circle cx="6.7" cy="6.7" r=".35" fill="#d7ecfa"/><circle cx="6.7" cy="10.1" r=".35" fill="#d7ecfa"/><circle cx="6.7" cy="13.5" r=".35" fill="#d7ecfa"/><circle cx="6.7" cy="16.9" r=".35" fill="#d7ecfa"/><circle cx="8.4" cy="1.6" r=".35" fill="#d7ecfa"/><circle cx="8.4" cy="5" r=".35" fill="#d7ecfa"/><circle cx="8.4" cy="8.4" r=".35" fill="#d7ecfa"/><circle cx="8.4" cy="11.8" r=".35" fill="#d7ecfa"/><circle cx="8.4" cy="15.2" r=".35" fill="#d7ecfa"/><circle cx="10.1" cy="3.3" r=".35" fill="#d7ecfa"/><circle cx="10.1" cy="6.7" r=".35" fill="#d7ecfa"/><circle cx="10.1" cy="10.1" r=".35" fill="#d7ecfa"/><circle cx="10.1" cy="13.5" r=".35" fill="#d7ecfa"/><circle cx="10.1" cy="16.9" r=".35" fill="#d7ecfa"/><circle cx="11.8" cy="1.6" r=".35" fill="#d7ecfa"/><circle cx="11.8" cy="5" r=".35" fill="#d7ecfa"/><circle cx="11.8" cy="8.4" r=".35" fill="#d7ecfa"/><circle cx="11.8" cy="11.8" r=".35" fill="#d7ecfa"/><circle cx="11.8" cy="15.2" r=".35" fill="#d7ecfa"/><circle cx="13.5" cy="3.3" r=".35" fill="#d7ecfa"/><circle cx="13.5" cy="6.7" r=".35" fill="#d7ecfa"/><circle cx="13.5" cy="10.1" r=".35" fill="#d7ecfa"/><circle cx="13.5" cy="13.5" r=".35" fill="#d7ecfa"/><circle cx="13.5" cy="16.9" r=".35" fill="#d7ecfa"/><circle cx="15.2" cy="1.6" r=".35" fill="#d7ecfa"/><circle cx="15.2" cy="5" r=".35" fill="#d7ecfa"/><circle cx="15.2" cy="8.4" r=".35" fill="#d7ecfa"/><circle cx="15.2" cy="11.8" r=".35" fill="#d7ecfa"/><circle cx="15.2" cy="15.2" r=".35" fill="#d7ecfa"/><circle cx="16.9" cy="3.3" r=".35" fill="#d7ecfa"/><circle cx="16.9" cy="6.7" r=".35" fill="#d7ecfa"/><circle cx="16.9" cy="10.1" r=".35" fill="#d7ecfa"/><circle cx="16.9" cy="13.5" r=".35" fill="#d7ecfa"/><circle cx="16.9" cy="16.9" r=".35" fill="#d7ecfa"/><path d="M0 13 L5.2 7.4 L9.5 12 L12.2 9.3 L17.6 14.4 V17.4 H0Z" fill="#2b8fd4"/><circle cx="12.8" cy="4.7" r="1.9" fill="#f4f9fd"/></svg>
<svg class="abs" style="left:742.2px;top:6.5px" width="22.8" height="22.6" viewBox="0 0 22.8 22.6"><rect x="0" y="0" width="22.8" height="22.6" fill="#1592da"/><rect x="2.4" y="2.4" width="16.4" height="12.8" fill="none" stroke="#7cc4ee" stroke-width=".8" stroke-dasharray="2.3 1.6"/><path d="M14.6 10.6 L20.4 16.3 L17.9 16.6 L19.3 19.6 L17.8 20.3 L16.4 17.3 L14.6 19Z" fill="#fff"/></svg>
<div class="abs" style="left:259.3px;top:8px;width:0;height:30px;border-left:1px solid #e2e2e2"></div>
<div class="abs" style="left:419.5px;top:8px;width:0;height:30px;border-left:1px solid #e2e2e2"></div>
<div class="abs" style="left:502.5px;top:8px;width:0;height:30px;border-left:1px solid #e2e2e2"></div>
<div class="abs" style="left:563.9px;top:8px;width:0;height:30px;border-left:1px solid #e2e2e2"></div>
<div class="abs" style="left:625.5px;top:8px;width:0;height:30px;border-left:1px solid #e2e2e2"></div>
<div class="abs" style="left:673px;top:8px;width:0;height:30px;border-left:1px solid #e2e2e2"></div>
<div class="abs" style="left:730.1px;top:8px;width:0;height:30px;border-left:1px solid #e2e2e2"></div>
<div class="tl" style="left:105.8px;top:30.6px;font-size:7.5px;color:#3c3c3c;font-weight:normal"><span class="tli" style="transform:scaleX(0.82)">CREATE<svg class="dd" width="4.4" height="3" viewBox="0 0 4.4 3"><path d="M0 .1 H4.4 L2.2 2.9Z" fill="#2a2a2a"/></svg></span></div>
<div class="tl" style="left:279.5px;top:30.6px;font-size:7.5px;color:#3c3c3c;font-weight:normal"><span class="tli" style="transform:scaleX(0.82)">MODIFY<svg class="dd" width="4.4" height="3" viewBox="0 0 4.4 3"><path d="M0 .1 H4.4 L2.2 2.9Z" fill="#2a2a2a"/></svg></span></div>
<div class="tl" style="left:401.5px;top:30.6px;font-size:7.5px;color:#3c3c3c;font-weight:normal"><span class="tli" style="transform:scaleX(0.82)">ASSEMBLE<svg class="dd" width="4.4" height="3" viewBox="0 0 4.4 3"><path d="M0 .1 H4.4 L2.2 2.9Z" fill="#2a2a2a"/></svg></span></div>
<div class="tl" style="left:473px;top:30.6px;font-size:7.5px;color:#3c3c3c;font-weight:normal"><span class="tli" style="transform:scaleX(0.82)">CONFIGURE<svg class="dd" width="4.4" height="3" viewBox="0 0 4.4 3"><path d="M0 .1 H4.4 L2.2 2.9Z" fill="#2a2a2a"/></svg></span></div>
<div class="tl" style="left:535.3px;top:30.6px;font-size:7.5px;color:#3c3c3c;font-weight:normal"><span class="tli" style="transform:scaleX(0.82)">CONSTRUCT<svg class="dd" width="4.4" height="3" viewBox="0 0 4.4 3"><path d="M0 .1 H4.4 L2.2 2.9Z" fill="#2a2a2a"/></svg></span></div>
<div class="tl" style="left:590.5px;top:30.6px;font-size:7.5px;color:#3c3c3c;font-weight:normal"><span class="tli" style="transform:scaleX(0.82)">INSPECT<svg class="dd" width="4.4" height="3" viewBox="0 0 4.4 3"><path d="M0 .1 H4.4 L2.2 2.9Z" fill="#2a2a2a"/></svg></span></div>
<div class="tl" style="left:641.3px;top:30.6px;font-size:7.5px;color:#3c3c3c;font-weight:normal"><span class="tli" style="transform:scaleX(0.82)">INSERT<svg class="dd" width="4.4" height="3" viewBox="0 0 4.4 3"><path d="M0 .1 H4.4 L2.2 2.9Z" fill="#2a2a2a"/></svg></span></div>
<div class="tl" style="left:693.6px;top:30.6px;font-size:7.5px;color:#3c3c3c;font-weight:normal"><span class="tli" style="transform:scaleX(0.82)">SELECT<svg class="dd" width="4.4" height="3" viewBox="0 0 4.4 3"><path d="M0 .1 H4.4 L2.2 2.9Z" fill="#2a2a2a"/></svg></span></div>
<div class="abs" style="left:0;top:39.9px;width:177px;height:1px;background:#e6e6e6"></div><div class="abs" style="left:177px;top:39.9px;width:83px;height:1px;background:repeating-linear-gradient(90deg,#dedede 0,#dedede 1.7px,transparent 1.7px,transparent 3px)"></div><div class="abs" style="left:260px;top:39.9px;width:1020px;height:1px;background:repeating-linear-gradient(90deg,#e2e2e2 0,#e2e2e2 4px,transparent 4px,transparent 5px)"></div><div class="abs" style="left:0;top:40.8px;width:1280px;height:2px;background:#f6f6f6"></div>
</div>
<div class="panel" style="left:2.3px;top:45.5px;width:178.7px;height:14.4px"></div>
<svg class="abs" style="left:5.4px;top:50.2px" width="7" height="5" viewBox="0 0 7 5"><path d="M3.2 0 V5 L0 2.5Z M6.6 0 V5 L3.4 2.5Z" fill="#2b2b2b"/></svg>
<div class="ptxt" style="left:17.2px;top:47.5px">BROWSER</div>
<svg class="abs" style="left:167.6px;top:49.3px" width="6.6" height="6.6" viewBox="0 0 6.6 6.6"><circle cx="3.3" cy="3.3" r="3.1" fill="#222"/><rect x="1.5" y="2.8" width="3.6" height="1" fill="#eee"/></svg>
<svg class="abs" style="left:12.4px;top:64.8px" width="7" height="8" viewBox="0 0 7 8"><path d="M6.4 .7 V7.3 H.2Z" fill="#ddd"/><path d="M6.4 .7 V7.3 H.2Z" fill="none" stroke="#1a1a1a" stroke-width=".7" stroke-linejoin="round"/><path d="M6 3 V6.9 H2.4Z" fill="#8a8a8a"/></svg>
<div class="rb" style="left:23.9px;top:63.30px;width:98px"></div>
<div class="abs" style="left:25.2px;top:63.80px;width:1.6px;height:10.6px;background:#dc7fe6"></div>
<svg class="abs" style="left:28.4px;top:65.6px" width="10" height="7" viewBox="0 0 10 7"><path d="M.6 3.5 Q2.4 .7 5 .7 Q7.6 .7 9.4 3.5 Q7.6 6.3 5 6.3 Q2.4 6.3 .6 3.5Z" fill="#e2e2e2" stroke="#979797" stroke-width="1.35"/><circle cx="5" cy="3.5" r="1.9" fill="#909090"/><circle cx="5" cy="3.5" r=".65" fill="#d6d6d6"/></svg>
<div class="abs" style="left:41.4px;top:63.80px;width:65.6px;height:10.6px;background:#9c9c9c"></div>
<svg class="abs" style="left:42.6px;top:63.5px" width="9" height="11" viewBox="0 0 9 11"><path d="M1 1.4 Q1 .5 2 .5 H3.6 Q4.6 .5 4.6 1.4 V3.8 L6 3.4 Q8.6 3.5 8.6 5 L8 9.6 Q7.8 10.5 6.8 10.5 H2.2 Q1 10.4 1 9.2Z" fill="#fdfdfd" stroke="#fdfdfd" stroke-width=".7"/><path d="M4.2 6.4 H6.6 V9.8 H4.2Z" fill="#9c9c9c"/></svg>
<div class="rt" style="left:31.3px;top:64.50px;color:#fff;font-weight:bold">Summit v20</div>
<svg class="abs" style="left:109.3px;top:65.10px" width="8" height="8" viewBox="0 0 8 8"><circle cx="4" cy="4" r="3.4" fill="#fafafa" stroke="#2c2c2c" stroke-width=".8"/><circle cx="4" cy="4" r="1.4" fill="#222"/></svg>
<svg class="abs" style="left:23.8px;top:78.881px" width="6" height="9" viewBox="0 0 6 9"><path d="M.5 .5 L5.5 4.5 L.5 8.5Z" fill="#fbfbfb" stroke="#777" stroke-width=".5" stroke-linejoin="round"/></svg>
<div class="rb" style="left:34.4px;top:77.58px;width:84.4px"></div>
<svg class="abs" style="left:36.5px;top:79.581px" width="7.4" height="7.4" viewBox="0 0 9 9"><circle cx="4.5" cy="4.5" r="2.7" fill="none" stroke="#707070" stroke-width="1.7"/><g stroke="#707070" stroke-width="1.5"><path d="M4.5 0 V2 M4.5 7 V9 M0 4.5 H2 M7 4.5 H9 M1.3 1.3 L2.7 2.7 M6.3 6.3 L7.7 7.7 M1.3 7.7 L2.7 6.3 M6.3 2.7 L7.7 1.3"/></g></svg>
<div class="rt" style="left:31.6px;top:78.98px">Document Settings</div>
<svg class="abs" style="left:23.8px;top:93.162px" width="6" height="9" viewBox="0 0 6 9"><path d="M.5 .5 L5.5 4.5 L.5 8.5Z" fill="#fbfbfb" stroke="#777" stroke-width=".5" stroke-linejoin="round"/></svg>
<div class="rb" style="left:34.4px;top:91.86px;width:67.9px"></div>
<svg class="abs" style="left:36.7px;top:93.362px" width="9.2" height="8" viewBox="0 0 9.2 8"><path d="M0 .9 H3.3 L4.1 2 H9.2 V8 H0Z" fill="#ababab"/><path d="M0 3 H9.2" stroke="#c2c2c2" stroke-width=".5"/><rect x="4.9" y=".5" width="1" height="1.1" fill="#ababab"/><rect x="6.7" y=".5" width="1" height="1.1" fill="#ababab"/></svg>
<div class="rt" style="left:25.2px;top:93.26px">Named Views</div>
<svg class="abs" style="left:23.8px;top:107.443px" width="6" height="9" viewBox="0 0 6 9"><path d="M.5 .5 L5.5 4.5 L.5 8.5Z" fill="#fbfbfb" stroke="#777" stroke-width=".5" stroke-linejoin="round"/></svg>
<div class="rb" style="left:34.4px;top:106.14px;width:61.2px"></div>
<svg class="abs" style="left:36.7px;top:108.443px" width="10" height="7" viewBox="0 0 10 7"><path d="M.4 3.5 Q5 -1.6 9.6 3.5 Q5 8.6 .4 3.5Z" fill="none" stroke="#ababab" stroke-width=".9" stroke-dasharray="2.2 .7"/><circle cx="5" cy="3.5" r="1.7" fill="none" stroke="#b0b0b0" stroke-width=".8"/><path d="M2 6.8 L8 .2" stroke="#b0b0b0" stroke-width=".8"/></svg>
<svg class="abs" style="left:51.3px;top:107.643px" width="9.2" height="8" viewBox="0 0 9.2 8"><path d="M0 .9 H3.3 L4.1 2 H9.2 V8 H0Z" fill="#ababab"/><path d="M0 3 H9.2" stroke="#c2c2c2" stroke-width=".5"/><rect x="4.9" y=".5" width="1" height="1.1" fill="#ababab"/><rect x="6.7" y=".5" width="1" height="1.1" fill="#ababab"/></svg>
<div class="rt" style="left:30.8px;top:107.54px">Origin</div>
<svg class="abs" style="left:22.9px;top:122.024px" width="7" height="8" viewBox="0 0 7 8"><path d="M6.4 .7 V7.3 H.2Z" fill="#ddd"/><path d="M6.4 .7 V7.3 H.2Z" fill="none" stroke="#1a1a1a" stroke-width=".7" stroke-linejoin="round"/><path d="M6 3 V6.9 H2.4Z" fill="#8a8a8a"/></svg>
<div class="rb" style="left:34.4px;top:120.42px;width:66.4px"></div>
<svg class="abs" style="left:36.7px;top:122.724px" width="10" height="7" viewBox="0 0 10 7"><path d="M.6 3.5 Q2.4 .7 5 .7 Q7.6 .7 9.4 3.5 Q7.6 6.3 5 6.3 Q2.4 6.3 .6 3.5Z" fill="#e2e2e2" stroke="#979797" stroke-width="1.35"/><circle cx="5" cy="3.5" r="1.9" fill="#909090"/><circle cx="5" cy="3.5" r=".65" fill="#d6d6d6"/></svg>
<svg class="abs" style="left:51.3px;top:121.924px" width="9.2" height="8" viewBox="0 0 9.2 8"><path d="M0 .9 H3.3 L4.1 2 H9.2 V8 H0Z" fill="#ababab"/><path d="M0 3 H9.2" stroke="#c2c2c2" stroke-width=".5"/><rect x="4.9" y=".5" width="1" height="1.1" fill="#ababab"/><rect x="6.7" y=".5" width="1" height="1.1" fill="#ababab"/></svg>
<div class="rt" style="left:31.8px;top:121.82px">Analysis</div>
<div class="rb" style="left:45.0px;top:134.70px;width:68.6px"></div>
<svg class="abs" style="left:47.3px;top:137.005px" width="10" height="7" viewBox="0 0 10 7"><path d="M.4 3.5 Q5 -1.6 9.6 3.5 Q5 8.6 .4 3.5Z" fill="none" stroke="#ababab" stroke-width=".9" stroke-dasharray="2.2 .7"/><circle cx="5" cy="3.5" r="1.7" fill="none" stroke="#b0b0b0" stroke-width=".8"/><path d="M2 6.8 L8 .2" stroke="#b0b0b0" stroke-width=".8"/></svg>
<svg class="abs" style="left:62.2px;top:134.905px" width="10" height="11" viewBox="0 0 10 11"><path d="M4 1.5 H8 Q9.3 3.5 8 5.5 Q9.3 7.5 8 9.5 H4Z M4 5.5 H8" fill="#f2f2f2" stroke="#9a9a9a" stroke-width=".7"/><path d="M2.7 .3 V10.7 M.8 2 H4.4 M.8 5.5 H4.4 M.8 9.3 H4.4" stroke="#2d9be6" stroke-width="1"/><circle cx="2.7" cy="9.6" r="1.3" fill="#2d9be6"/><circle cx="1.2" cy="1" r=".9" fill="#2d9be6"/></svg>
<div class="rt" style="left:43.0px;top:136.10px">Section2</div>
<svg class="abs" style="left:22.9px;top:150.586px" width="7" height="8" viewBox="0 0 7 8"><path d="M6.4 .7 V7.3 H.2Z" fill="#ddd"/><path d="M6.4 .7 V7.3 H.2Z" fill="none" stroke="#1a1a1a" stroke-width=".7" stroke-linejoin="round"/><path d="M6 3 V6.9 H2.4Z" fill="#8a8a8a"/></svg>
<div class="rb" style="left:34.4px;top:148.99px;width:68.4px"></div>
<svg class="abs" style="left:36.7px;top:151.286px" width="10" height="7" viewBox="0 0 10 7"><path d="M.6 3.5 Q2.4 .7 5 .7 Q7.6 .7 9.4 3.5 Q7.6 6.3 5 6.3 Q2.4 6.3 .6 3.5Z" fill="#e2e2e2" stroke="#979797" stroke-width="1.35"/><circle cx="5" cy="3.5" r="1.9" fill="#909090"/><circle cx="5" cy="3.5" r=".65" fill="#d6d6d6"/></svg>
<svg class="abs" style="left:51.3px;top:150.486px" width="9.2" height="8" viewBox="0 0 9.2 8"><path d="M0 .9 H3.3 L4.1 2 H9.2 V8 H0Z" fill="#ababab"/><path d="M0 3 H9.2" stroke="#c2c2c2" stroke-width=".5"/><rect x="4.9" y=".5" width="1" height="1.1" fill="#ababab"/><rect x="6.7" y=".5" width="1" height="1.1" fill="#ababab"/></svg>
<div class="rt" style="left:32.5px;top:150.39px">Sketches</div>
<div class="rb" style="left:45.0px;top:163.27px;width:94.8px"></div>
<svg class="abs" style="left:47.3px;top:165.567px" width="10" height="7" viewBox="0 0 10 7"><path d="M.4 3.5 Q5 -1.6 9.6 3.5 Q5 8.6 .4 3.5Z" fill="none" stroke="#ababab" stroke-width=".9" stroke-dasharray="2.2 .7"/><circle cx="5" cy="3.5" r="1.7" fill="none" stroke="#b0b0b0" stroke-width=".8"/><path d="M2 6.8 L8 .2" stroke="#b0b0b0" stroke-width=".8"/></svg>
<svg class="abs" style="left:62.1px;top:163.767px" width="11" height="11" viewBox="0 0 11 11"><path d="M1 9 V1 H8.6 V5.4 M1 9.2 H4" fill="none" stroke="#5a5a5a" stroke-width=".65"/><rect x=".1" y=".1" width="1.7" height="1.7" fill="#2d9be6"/><rect x="7.8" y=".1" width="1.7" height="1.7" fill="#2d9be6"/><rect x=".1" y="8.3" width="1.7" height="1.7" fill="#2d9be6"/><path d="M5.4 9.1 L8.8 6 L9.9 7.1 L6.5 10.2 L5 10.5Z" fill="#f4a63a"/><path d="M5 10.5 l.3 -1.1 l.8 .8z" fill="#555"/></svg>
<div class="rt" style="left:56.1px;top:164.67px">Faceplate_Profile</div>
<svg class="abs" style="left:22.9px;top:179.148px" width="7" height="8" viewBox="0 0 7 8"><path d="M6.4 .7 V7.3 H.2Z" fill="#ddd"/><path d="M6.4 .7 V7.3 H.2Z" fill="none" stroke="#1a1a1a" stroke-width=".7" stroke-linejoin="round"/><path d="M6 3 V6.9 H2.4Z" fill="#8a8a8a"/></svg>
<div class="rb" style="left:34.4px;top:177.55px;width:80.4px"></div>
<svg class="abs" style="left:36.7px;top:179.848px" width="10" height="7" viewBox="0 0 10 7"><path d="M.6 3.5 Q2.4 .7 5 .7 Q7.6 .7 9.4 3.5 Q7.6 6.3 5 6.3 Q2.4 6.3 .6 3.5Z" fill="#e2e2e2" stroke="#979797" stroke-width="1.35"/><circle cx="5" cy="3.5" r="1.9" fill="#909090"/><circle cx="5" cy="3.5" r=".65" fill="#d6d6d6"/></svg>
<svg class="abs" style="left:51.3px;top:179.048px" width="9.2" height="8" viewBox="0 0 9.2 8"><path d="M0 .9 H3.3 L4.1 2 H9.2 V8 H0Z" fill="#ababab"/><path d="M0 3 H9.2" stroke="#c2c2c2" stroke-width=".5"/><rect x="4.9" y=".5" width="1" height="1.1" fill="#ababab"/><rect x="6.7" y=".5" width="1" height="1.1" fill="#ababab"/></svg>
<div class="rt" style="left:39.2px;top:178.95px">Construction</div>
<div class="rb" style="left:45.0px;top:191.83px;width:61.6px"></div>
<svg class="abs" style="left:47.3px;top:194.129px" width="10" height="7" viewBox="0 0 10 7"><path d="M.4 3.5 Q5 -1.6 9.6 3.5 Q5 8.6 .4 3.5Z" fill="none" stroke="#ababab" stroke-width=".9" stroke-dasharray="2.2 .7"/><circle cx="5" cy="3.5" r="1.7" fill="none" stroke="#b0b0b0" stroke-width=".8"/><path d="M2 6.8 L8 .2" stroke="#b0b0b0" stroke-width=".8"/></svg>
<svg class="abs" style="left:62.2px;top:191.629px" width="11" height="12" viewBox="0 0 11 12"><path d="M3.6 .6 H10 V7.6 H7.6" fill="#f8f8f8" stroke="#666" stroke-width=".75"/><rect x=".4" y="3.6" width="7" height="7.6" fill="#f3ac3b"/><circle cx="4.8" cy="6.3" r=".45" fill="#8a5a10"/><circle cx="4.8" cy="8.2" r=".45" fill="#8a5a10"/></svg>
<div class="rt" style="left:39.9px;top:193.23px">Plane2</div>
<svg class="abs" style="left:22.9px;top:207.71px" width="7" height="8" viewBox="0 0 7 8"><path d="M6.4 .7 V7.3 H.2Z" fill="#ddd"/><path d="M6.4 .7 V7.3 H.2Z" fill="none" stroke="#1a1a1a" stroke-width=".7" stroke-linejoin="round"/><path d="M6 3 V6.9 H2.4Z" fill="#8a8a8a"/></svg>
<div class="rb" style="left:34.4px;top:206.11px;width:80.9px"></div>
<div class="abs" style="left:34.6px;top:206.21px;width:2.2px;height:11.4px;background:#f4a99b"></div>
<svg class="abs" style="left:39.3px;top:208.41px" width="10" height="7" viewBox="0 0 10 7"><path d="M.6 3.5 Q2.4 .7 5 .7 Q7.6 .7 9.4 3.5 Q7.6 6.3 5 6.3 Q2.4 6.3 .6 3.5Z" fill="#e2e2e2" stroke="#979797" stroke-width="1.35"/><circle cx="5" cy="3.5" r="1.9" fill="#909090"/><circle cx="5" cy="3.5" r=".65" fill="#d6d6d6"/></svg>
<svg class="abs" style="left:54.1px;top:206.21px" width="10" height="11" viewBox="0 0 10 11"><path d="M7.2 0 V4" stroke="#555" stroke-width=".9"/><path d="M5.6 2.8 H8.8 L7.2 4.8Z" fill="#555"/><path d="M.6 3.6 Q.6 2.4 1.8 2.4 H4.6 V6 H.6Z M5.4 6 V5.2 H8 Q9 5.3 9 6.4 V6.8 H5.4Z M.6 6.8 H4.6 V10.4 H1.8 Q.6 10.3 .6 9.2Z M5.4 7.6 H9 V9.4 Q8.8 10.4 7.8 10.4 H5.4Z" fill="#f7f7f7" stroke="#666" stroke-width=".7"/></svg>
<div class="rt" style="left:40.0px;top:207.51px">Plate_Top:1</div>
<svg class="abs" style="left:34.8px;top:221.691px" width="6" height="9" viewBox="0 0 6 9"><path d="M.5 .5 L5.5 4.5 L.5 8.5Z" fill="#fbfbfb" stroke="#777" stroke-width=".5" stroke-linejoin="round"/></svg>
<div class="rb" style="left:45.0px;top:220.39px;width:61.6px"></div>
<svg class="abs" style="left:47.3px;top:222.691px" width="10" height="7" viewBox="0 0 10 7"><path d="M.4 3.5 Q5 -1.6 9.6 3.5 Q5 8.6 .4 3.5Z" fill="none" stroke="#ababab" stroke-width=".9" stroke-dasharray="2.2 .7"/><circle cx="5" cy="3.5" r="1.7" fill="none" stroke="#b0b0b0" stroke-width=".8"/><path d="M2 6.8 L8 .2" stroke="#b0b0b0" stroke-width=".8"/></svg>
<svg class="abs" style="left:61.9px;top:221.891px" width="9.2" height="8" viewBox="0 0 9.2 8"><path d="M0 .9 H3.3 L4.1 2 H9.2 V8 H0Z" fill="#ababab"/><path d="M0 3 H9.2" stroke="#c2c2c2" stroke-width=".5"/><rect x="4.9" y=".5" width="1" height="1.1" fill="#ababab"/><rect x="6.7" y=".5" width="1" height="1.1" fill="#ababab"/></svg>
<div class="rt" style="left:39.3px;top:221.79px">Origin</div>
<svg class="abs" style="left:33.9px;top:236.272px" width="7" height="8" viewBox="0 0 7 8"><path d="M6.4 .7 V7.3 H.2Z" fill="#ddd"/><path d="M6.4 .7 V7.3 H.2Z" fill="none" stroke="#1a1a1a" stroke-width=".7" stroke-linejoin="round"/><path d="M6 3 V6.9 H2.4Z" fill="#8a8a8a"/></svg>
<div class="rb" style="left:45.0px;top:234.67px;width:61.6px"></div>
<svg class="abs" style="left:47.3px;top:236.972px" width="10" height="7" viewBox="0 0 10 7"><path d="M.6 3.5 Q2.4 .7 5 .7 Q7.6 .7 9.4 3.5 Q7.6 6.3 5 6.3 Q2.4 6.3 .6 3.5Z" fill="#e2e2e2" stroke="#979797" stroke-width="1.35"/><circle cx="5" cy="3.5" r="1.9" fill="#909090"/><circle cx="5" cy="3.5" r=".65" fill="#d6d6d6"/></svg>
<svg class="abs" style="left:61.9px;top:236.172px" width="9.2" height="8" viewBox="0 0 9.2 8"><path d="M0 .9 H3.3 L4.1 2 H9.2 V8 H0Z" fill="#ababab"/><path d="M0 3 H9.2" stroke="#c2c2c2" stroke-width=".5"/><rect x="4.9" y=".5" width="1" height="1.1" fill="#ababab"/><rect x="6.7" y=".5" width="1" height="1.1" fill="#ababab"/></svg>
<div class="rt" style="left:39.9px;top:236.07px">Bodies</div>
<div class="rb" style="left:56.0px;top:248.95px;width:58.8px"></div>
<svg class="abs" style="left:58.3px;top:251.253px" width="10" height="7" viewBox="0 0 10 7"><path d="M.6 3.5 Q2.4 .7 5 .7 Q7.6 .7 9.4 3.5 Q7.6 6.3 5 6.3 Q2.4 6.3 .6 3.5Z" fill="#e2e2e2" stroke="#979797" stroke-width="1.35"/><circle cx="5" cy="3.5" r="1.9" fill="#909090"/><circle cx="5" cy="3.5" r=".65" fill="#d6d6d6"/></svg>
<svg class="abs" style="left:72.3px;top:249.253px" width="10" height="11" viewBox="0 0 10 11"><path d="M1.6 .8 H8.4 Q9.5 1 9.5 2.2 V8.6 Q9.4 10 8 10.2 H2 Q.6 10 .5 8.6 V2.2 Q.6 1 1.6 .8Z" fill="#f5f5f5" stroke="#5e5e5e" stroke-width=".85"/><path d="M1.5 9.6 Q5 11.4 8.5 9.6" fill="none" stroke="#9a9a9a" stroke-width=".6"/><path d="M4 4.4 V8 M4 6 H6.2 M4 8 H6.2" stroke="#c9c9c9" stroke-width=".6" fill="none"/></svg>
<div class="rt" style="left:49.8px;top:250.35px">Body1</div>
<svg class="abs" style="left:33.9px;top:264.834px" width="7" height="8" viewBox="0 0 7 8"><path d="M6.4 .7 V7.3 H.2Z" fill="#ddd"/><path d="M6.4 .7 V7.3 H.2Z" fill="none" stroke="#1a1a1a" stroke-width=".7" stroke-linejoin="round"/><path d="M6 3 V6.9 H2.4Z" fill="#8a8a8a"/></svg>
<div class="rb" style="left:45.0px;top:263.23px;width:68.6px"></div>
<svg class="abs" style="left:47.3px;top:265.534px" width="10" height="7" viewBox="0 0 10 7"><path d="M.6 3.5 Q2.4 .7 5 .7 Q7.6 .7 9.4 3.5 Q7.6 6.3 5 6.3 Q2.4 6.3 .6 3.5Z" fill="#e2e2e2" stroke="#979797" stroke-width="1.35"/><circle cx="5" cy="3.5" r="1.9" fill="#909090"/><circle cx="5" cy="3.5" r=".65" fill="#d6d6d6"/></svg>
<svg class="abs" style="left:61.9px;top:264.734px" width="9.2" height="8" viewBox="0 0 9.2 8"><path d="M0 .9 H3.3 L4.1 2 H9.2 V8 H0Z" fill="#ababab"/><path d="M0 3 H9.2" stroke="#c2c2c2" stroke-width=".5"/><rect x="4.9" y=".5" width="1" height="1.1" fill="#ababab"/><rect x="6.7" y=".5" width="1" height="1.1" fill="#ababab"/></svg>
<div class="rt" style="left:43.4px;top:264.63px">Sketches</div>
<div class="rb" style="left:56.0px;top:277.51px;width:82.8px"></div>
<svg class="abs" style="left:58.3px;top:279.815px" width="10" height="7" viewBox="0 0 10 7"><path d="M.4 3.5 Q5 -1.6 9.6 3.5 Q5 8.6 .4 3.5Z" fill="none" stroke="#ababab" stroke-width=".9" stroke-dasharray="2.2 .7"/><circle cx="5" cy="3.5" r="1.7" fill="none" stroke="#b0b0b0" stroke-width=".8"/><path d="M2 6.8 L8 .2" stroke="#b0b0b0" stroke-width=".8"/></svg>
<svg class="abs" style="left:72.2px;top:277.715px" width="11" height="12" viewBox="0 0 11 12"><path d="M1.6 9 V1.6 H9 V4.6 M1.6 9 H4.6" fill="none" stroke="#7a7a7a" stroke-width=".6"/><path d="M.4 1.6 H2.8 M.4 9 H2.8 M7.8 1.6 H10.2 M1.6 .4 V2.8 M9 .4 V2.8 M1.6 7.8 V10.2" stroke="#6a6a6a" stroke-width=".6"/><path d="M8.3 5 L10.3 7.4 V10.3 H6.3 V7.4Z" fill="#f6a52f"/><rect x="7.1" y="8.1" width="2.4" height="1.2" fill="#fbcfa8"/><circle cx="6.8" cy="7.8" r=".4" fill="#444"/><circle cx="9.8" cy="7.8" r=".4" fill="#444"/><circle cx="6.8" cy="9.8" r=".4" fill="#444"/><circle cx="9.8" cy="9.8" r=".4" fill="#444"/></svg>
<div class="rt" style="left:60.8px;top:278.92px">Key_standoff</div>
<div class="rb" style="left:56.0px;top:291.80px;width:80.0px"></div>
<svg class="abs" style="left:58.3px;top:294.096px" width="10" height="7" viewBox="0 0 10 7"><path d="M.4 3.5 Q5 -1.6 9.6 3.5 Q5 8.6 .4 3.5Z" fill="none" stroke="#ababab" stroke-width=".9" stroke-dasharray="2.2 .7"/><circle cx="5" cy="3.5" r="1.7" fill="none" stroke="#b0b0b0" stroke-width=".8"/><path d="M2 6.8 L8 .2" stroke="#b0b0b0" stroke-width=".8"/></svg>
<svg class="abs" style="left:72.2px;top:291.996px" width="11" height="12" viewBox="0 0 11 12"><path d="M1.6 9 V1.6 H9 V4.6 M1.6 9 H4.6" fill="none" stroke="#7a7a7a" stroke-width=".6"/><path d="M.4 1.6 H2.8 M.4 9 H2.8 M7.8 1.6 H10.2 M1.6 .4 V2.8 M9 .4 V2.8 M1.6 7.8 V10.2" stroke="#6a6a6a" stroke-width=".6"/><path d="M8.3 5 L10.3 7.4 V10.3 H6.3 V7.4Z" fill="#f6a52f"/><rect x="7.1" y="8.1" width="2.4" height="1.2" fill="#fbcfa8"/><circle cx="6.8" cy="7.8" r=".4" fill="#444"/><circle cx="9.8" cy="7.8" r=".4" fill="#444"/><circle cx="6.8" cy="9.8" r=".4" fill="#444"/><circle cx="9.8" cy="9.8" r=".4" fill="#444"/></svg>
<div class="rt" style="left:60.2px;top:293.20px">Midpost_nut</div>
<div class="rb" style="left:56.0px;top:306.08px;width:65.9px"></div>
<svg class="abs" style="left:58.3px;top:308.377px" width="10" height="7" viewBox="0 0 10 7"><path d="M.4 3.5 Q5 -1.6 9.6 3.5 Q5 8.6 .4 3.5Z" fill="none" stroke="#ababab" stroke-width=".9" stroke-dasharray="2.2 .7"/><circle cx="5" cy="3.5" r="1.7" fill="none" stroke="#b0b0b0" stroke-width=".8"/><path d="M2 6.8 L8 .2" stroke="#b0b0b0" stroke-width=".8"/></svg>
<svg class="abs" style="left:73.1px;top:306.577px" width="11" height="11" viewBox="0 0 11 11"><path d="M1 9 V1 H8.6 V5.4 M1 9.2 H4" fill="none" stroke="#5a5a5a" stroke-width=".65"/><rect x=".1" y=".1" width="1.7" height="1.7" fill="#2d9be6"/><rect x="7.8" y=".1" width="1.7" height="1.7" fill="#2d9be6"/><rect x=".1" y="8.3" width="1.7" height="1.7" fill="#2d9be6"/><path d="M5.4 9.1 L8.8 6 L9.9 7.1 L6.5 10.2 L5 10.5Z" fill="#f4a63a"/><path d="M5 10.5 l.3 -1.1 l.8 .8z" fill="#555"/></svg>
<div class="rt" style="left:53.5px;top:307.48px">cap_slot</div>
<svg class="abs" style="left:34.8px;top:321.658px" width="6" height="9" viewBox="0 0 6 9"><path d="M.5 .5 L5.5 4.5 L.5 8.5Z" fill="#fbfbfb" stroke="#777" stroke-width=".5" stroke-linejoin="round"/></svg>
<div class="rb" style="left:45.0px;top:320.36px;width:80.5px"></div>
<svg class="abs" style="left:47.3px;top:322.658px" width="10" height="7" viewBox="0 0 10 7"><path d="M.6 3.5 Q2.4 .7 5 .7 Q7.6 .7 9.4 3.5 Q7.6 6.3 5 6.3 Q2.4 6.3 .6 3.5Z" fill="#e2e2e2" stroke="#979797" stroke-width="1.35"/><circle cx="5" cy="3.5" r="1.9" fill="#909090"/><circle cx="5" cy="3.5" r=".65" fill="#d6d6d6"/></svg>
<svg class="abs" style="left:61.9px;top:321.858px" width="9.2" height="8" viewBox="0 0 9.2 8"><path d="M0 .9 H3.3 L4.1 2 H9.2 V8 H0Z" fill="#ababab"/><path d="M0 3 H9.2" stroke="#c2c2c2" stroke-width=".5"/><rect x="4.9" y=".5" width="1" height="1.1" fill="#ababab"/><rect x="6.7" y=".5" width="1" height="1.1" fill="#ababab"/></svg>
<div class="rt" style="left:50.0px;top:321.76px">Construction</div>
<svg class="abs" style="left:33.9px;top:336.239px" width="7" height="8" viewBox="0 0 7 8"><path d="M6.4 .7 V7.3 H.2Z" fill="#ddd"/><path d="M6.4 .7 V7.3 H.2Z" fill="none" stroke="#1a1a1a" stroke-width=".7" stroke-linejoin="round"/><path d="M6 3 V6.9 H2.4Z" fill="#8a8a8a"/></svg>
<div class="rb" style="left:45.0px;top:334.64px;width:90.6px"></div>
<div class="abs" style="left:45.2px;top:334.74px;width:2.2px;height:11.4px;background:#f4a99b"></div>
<svg class="abs" style="left:49.9px;top:336.939px" width="10" height="7" viewBox="0 0 10 7"><path d="M.6 3.5 Q2.4 .7 5 .7 Q7.6 .7 9.4 3.5 Q7.6 6.3 5 6.3 Q2.4 6.3 .6 3.5Z" fill="#e2e2e2" stroke="#979797" stroke-width="1.35"/><circle cx="5" cy="3.5" r="1.9" fill="#909090"/><circle cx="5" cy="3.5" r=".65" fill="#d6d6d6"/></svg>
<svg class="abs" style="left:64.8px;top:334.739px" width="10" height="11" viewBox="0 0 10 11"><path d="M3.2 0 V2.8" stroke="#555" stroke-width=".9"/><path d="M1.8 1.8 H4.6 L3.2 3.6Z" fill="#555"/><path d="M1.2 3.4 H9.2 V7.8 L7 10.4 H2.2 Q1.2 10.3 1.2 9.2Z" fill="#f8f8f8" stroke="#666" stroke-width=".7"/><path d="M9.2 3.4 L7 5.4 V10.4 M7 5.4 H1.2" fill="none" stroke="#8a8a8a" stroke-width=".5"/></svg>
<div class="rt" style="left:55.9px;top:336.04px">Keyhole_Cap:1</div>
<svg class="abs" style="left:45.2px;top:350.22px" width="6" height="9" viewBox="0 0 6 9"><path d="M.5 .5 L5.5 4.5 L.5 8.5Z" fill="#fbfbfb" stroke="#777" stroke-width=".5" stroke-linejoin="round"/></svg>
<div class="rb" style="left:56.0px;top:348.92px;width:60.9px"></div>
<svg class="abs" style="left:58.3px;top:351.22px" width="10" height="7" viewBox="0 0 10 7"><path d="M.4 3.5 Q5 -1.6 9.6 3.5 Q5 8.6 .4 3.5Z" fill="none" stroke="#ababab" stroke-width=".9" stroke-dasharray="2.2 .7"/><circle cx="5" cy="3.5" r="1.7" fill="none" stroke="#b0b0b0" stroke-width=".8"/><path d="M2 6.8 L8 .2" stroke="#b0b0b0" stroke-width=".8"/></svg>
<svg class="abs" style="left:72.9px;top:350.42px" width="9.2" height="8" viewBox="0 0 9.2 8"><path d="M0 .9 H3.3 L4.1 2 H9.2 V8 H0Z" fill="#ababab"/><path d="M0 3 H9.2" stroke="#c2c2c2" stroke-width=".5"/><rect x="4.9" y=".5" width="1" height="1.1" fill="#ababab"/><rect x="6.7" y=".5" width="1" height="1.1" fill="#ababab"/></svg>
<div class="rt" style="left:50.0px;top:350.32px">Origin</div>
<svg class="abs" style="left:45.2px;top:364.501px" width="6" height="9" viewBox="0 0 6 9"><path d="M.5 .5 L5.5 4.5 L.5 8.5Z" fill="#fbfbfb" stroke="#777" stroke-width=".5" stroke-linejoin="round"/></svg>
<div class="rb" style="left:56.0px;top:363.20px;width:60.9px"></div>
<svg class="abs" style="left:58.3px;top:365.501px" width="10" height="7" viewBox="0 0 10 7"><path d="M.6 3.5 Q2.4 .7 5 .7 Q7.6 .7 9.4 3.5 Q7.6 6.3 5 6.3 Q2.4 6.3 .6 3.5Z" fill="#e2e2e2" stroke="#979797" stroke-width="1.35"/><circle cx="5" cy="3.5" r="1.9" fill="#909090"/><circle cx="5" cy="3.5" r=".65" fill="#d6d6d6"/></svg>
<svg class="abs" style="left:72.9px;top:364.701px" width="9.2" height="8" viewBox="0 0 9.2 8"><path d="M0 .9 H3.3 L4.1 2 H9.2 V8 H0Z" fill="#ababab"/><path d="M0 3 H9.2" stroke="#c2c2c2" stroke-width=".5"/><rect x="4.9" y=".5" width="1" height="1.1" fill="#ababab"/><rect x="6.7" y=".5" width="1" height="1.1" fill="#ababab"/></svg>
<div class="rt" style="left:50.8px;top:364.60px">Bodies</div>
<svg class="abs" style="left:22.9px;top:379.082px" width="7" height="8" viewBox="0 0 7 8"><path d="M6.4 .7 V7.3 H.2Z" fill="#ddd"/><path d="M6.4 .7 V7.3 H.2Z" fill="none" stroke="#1a1a1a" stroke-width=".7" stroke-linejoin="round"/><path d="M6 3 V6.9 H2.4Z" fill="#8a8a8a"/></svg>
<div class="rb" style="left:34.4px;top:377.48px;width:90.3px"></div>
<div class="abs" style="left:34.6px;top:377.58px;width:2.2px;height:11.4px;background:#f4a93d"></div>
<svg class="abs" style="left:39.3px;top:379.782px" width="10" height="7" viewBox="0 0 10 7"><path d="M.6 3.5 Q2.4 .7 5 .7 Q7.6 .7 9.4 3.5 Q7.6 6.3 5 6.3 Q2.4 6.3 .6 3.5Z" fill="#e2e2e2" stroke="#979797" stroke-width="1.35"/><circle cx="5" cy="3.5" r="1.9" fill="#909090"/><circle cx="5" cy="3.5" r=".65" fill="#d6d6d6"/></svg>
<svg class="abs" style="left:54.1px;top:377.682px" width="10" height="11" viewBox="0 0 10 11"><path d="M1 1.4 Q1 .5 2 .5 H3.6 Q4.6 .5 4.6 1.4 V3.6 L6.4 3.2 Q9.6 3.3 9.6 5 L8.8 9.6 Q8.5 10.5 7.4 10.5 H2.2 Q1 10.4 1 9.2Z" fill="#f8f8f8" stroke="#5e5e5e" stroke-width=".7"/><path d="M4.4 6.6 H6.8 V10 H4.4Z" fill="#ededed" stroke="#9a9a9a" stroke-width=".5"/></svg>
<div class="rt" style="left:45.3px;top:378.88px">Plate_Bottom:1</div>
<svg class="abs" style="left:34.8px;top:393.063px" width="6" height="9" viewBox="0 0 6 9"><path d="M.5 .5 L5.5 4.5 L.5 8.5Z" fill="#fbfbfb" stroke="#777" stroke-width=".5" stroke-linejoin="round"/></svg>
<div class="rb" style="left:45.0px;top:391.76px;width:61.6px"></div>
<svg class="abs" style="left:47.3px;top:394.063px" width="10" height="7" viewBox="0 0 10 7"><path d="M.4 3.5 Q5 -1.6 9.6 3.5 Q5 8.6 .4 3.5Z" fill="none" stroke="#ababab" stroke-width=".9" stroke-dasharray="2.2 .7"/><circle cx="5" cy="3.5" r="1.7" fill="none" stroke="#b0b0b0" stroke-width=".8"/><path d="M2 6.8 L8 .2" stroke="#b0b0b0" stroke-width=".8"/></svg>
<svg class="abs" style="left:61.9px;top:393.263px" width="9.2" height="8" viewBox="0 0 9.2 8"><path d="M0 .9 H3.3 L4.1 2 H9.2 V8 H0Z" fill="#ababab"/><path d="M0 3 H9.2" stroke="#c2c2c2" stroke-width=".5"/><rect x="4.9" y=".5" width="1" height="1.1" fill="#ababab"/><rect x="6.7" y=".5" width="1" height="1.1" fill="#ababab"/></svg>
<div class="rt" style="left:39.3px;top:393.16px">Origin</div>
<svg class="abs" style="left:34.8px;top:407.344px" width="6" height="9" viewBox="0 0 6 9"><path d="M.5 .5 L5.5 4.5 L.5 8.5Z" fill="#fbfbfb" stroke="#777" stroke-width=".5" stroke-linejoin="round"/></svg>
<div class="rb" style="left:45.0px;top:406.04px;width:61.6px"></div>
<svg class="abs" style="left:47.3px;top:408.344px" width="10" height="7" viewBox="0 0 10 7"><path d="M.6 3.5 Q2.4 .7 5 .7 Q7.6 .7 9.4 3.5 Q7.6 6.3 5 6.3 Q2.4 6.3 .6 3.5Z" fill="#e2e2e2" stroke="#979797" stroke-width="1.35"/><circle cx="5" cy="3.5" r="1.9" fill="#909090"/><circle cx="5" cy="3.5" r=".65" fill="#d6d6d6"/></svg>
<svg class="abs" style="left:61.9px;top:407.544px" width="9.2" height="8" viewBox="0 0 9.2 8"><path d="M0 .9 H3.3 L4.1 2 H9.2 V8 H0Z" fill="#ababab"/><path d="M0 3 H9.2" stroke="#c2c2c2" stroke-width=".5"/><rect x="4.9" y=".5" width="1" height="1.1" fill="#ababab"/><rect x="6.7" y=".5" width="1" height="1.1" fill="#ababab"/></svg>
<div class="rt" style="left:39.9px;top:407.44px">Bodies</div>
<svg class="abs" style="left:33.9px;top:421.925px" width="7" height="8" viewBox="0 0 7 8"><path d="M6.4 .7 V7.3 H.2Z" fill="#ddd"/><path d="M6.4 .7 V7.3 H.2Z" fill="none" stroke="#1a1a1a" stroke-width=".7" stroke-linejoin="round"/><path d="M6 3 V6.9 H2.4Z" fill="#8a8a8a"/></svg>
<div class="rb" style="left:45.0px;top:420.32px;width:68.6px"></div>
<svg class="abs" style="left:47.3px;top:422.625px" width="10" height="7" viewBox="0 0 10 7"><path d="M.6 3.5 Q2.4 .7 5 .7 Q7.6 .7 9.4 3.5 Q7.6 6.3 5 6.3 Q2.4 6.3 .6 3.5Z" fill="#e2e2e2" stroke="#979797" stroke-width="1.35"/><circle cx="5" cy="3.5" r="1.9" fill="#909090"/><circle cx="5" cy="3.5" r=".65" fill="#d6d6d6"/></svg>
<svg class="abs" style="left:61.9px;top:421.825px" width="9.2" height="8" viewBox="0 0 9.2 8"><path d="M0 .9 H3.3 L4.1 2 H9.2 V8 H0Z" fill="#ababab"/><path d="M0 3 H9.2" stroke="#c2c2c2" stroke-width=".5"/><rect x="4.9" y=".5" width="1" height="1.1" fill="#ababab"/><rect x="6.7" y=".5" width="1" height="1.1" fill="#ababab"/></svg>
<div class="rt" style="left:43.4px;top:421.73px">Sketches</div>
<div class="rb" style="left:56.0px;top:434.61px;width:85.0px"></div>
<svg class="abs" style="left:58.3px;top:436.906px" width="10" height="7" viewBox="0 0 10 7"><path d="M.4 3.5 Q5 -1.6 9.6 3.5 Q5 8.6 .4 3.5Z" fill="none" stroke="#ababab" stroke-width=".9" stroke-dasharray="2.2 .7"/><circle cx="5" cy="3.5" r="1.7" fill="none" stroke="#b0b0b0" stroke-width=".8"/><path d="M2 6.8 L8 .2" stroke="#b0b0b0" stroke-width=".8"/></svg>
<svg class="abs" style="left:72.2px;top:434.806px" width="11" height="12" viewBox="0 0 11 12"><path d="M1.6 9 V1.6 H9 V4.6 M1.6 9 H4.6" fill="none" stroke="#7a7a7a" stroke-width=".6"/><path d="M.4 1.6 H2.8 M.4 9 H2.8 M7.8 1.6 H10.2 M1.6 .4 V2.8 M9 .4 V2.8 M1.6 7.8 V10.2" stroke="#6a6a6a" stroke-width=".6"/><path d="M8.3 5 L10.3 7.4 V10.3 H6.3 V7.4Z" fill="#f6a52f"/><rect x="7.1" y="8.1" width="2.4" height="1.2" fill="#fbcfa8"/><circle cx="6.8" cy="7.8" r=".4" fill="#444"/><circle cx="9.8" cy="7.8" r=".4" fill="#444"/><circle cx="6.8" cy="9.8" r=".4" fill="#444"/><circle cx="9.8" cy="9.8" r=".4" fill="#444"/></svg>
<div class="rt" style="left:62.9px;top:436.01px">D_plate_screw</div>
<div class="rb" style="left:56.0px;top:448.89px;width:94.5px"></div>
<svg class="abs" style="left:58.3px;top:451.187px" width="10" height="7" viewBox="0 0 10 7"><path d="M.4 3.5 Q5 -1.6 9.6 3.5 Q5 8.6 .4 3.5Z" fill="none" stroke="#ababab" stroke-width=".9" stroke-dasharray="2.2 .7"/><circle cx="5" cy="3.5" r="1.7" fill="none" stroke="#b0b0b0" stroke-width=".8"/><path d="M2 6.8 L8 .2" stroke="#b0b0b0" stroke-width=".8"/></svg>
<svg class="abs" style="left:72.2px;top:449.087px" width="11" height="12" viewBox="0 0 11 12"><path d="M1.6 9 V1.6 H9 V4.6 M1.6 9 H4.6" fill="none" stroke="#7a7a7a" stroke-width=".6"/><path d="M.4 1.6 H2.8 M.4 9 H2.8 M7.8 1.6 H10.2 M1.6 .4 V2.8 M9 .4 V2.8 M1.6 7.8 V10.2" stroke="#6a6a6a" stroke-width=".6"/><path d="M8.3 5 L10.3 7.4 V10.3 H6.3 V7.4Z" fill="#f6a52f"/><rect x="7.1" y="8.1" width="2.4" height="1.2" fill="#fbcfa8"/><circle cx="6.8" cy="7.8" r=".4" fill="#444"/><circle cx="9.8" cy="7.8" r=".4" fill="#444"/><circle cx="6.8" cy="9.8" r=".4" fill="#444"/><circle cx="9.8" cy="9.8" r=".4" fill="#444"/></svg>
<div class="rt" style="left:67.6px;top:450.29px">Key_standoff_nut</div>
<svg class="abs" style="left:33.9px;top:464.768px" width="7" height="8" viewBox="0 0 7 8"><path d="M6.4 .7 V7.3 H.2Z" fill="#ddd"/><path d="M6.4 .7 V7.3 H.2Z" fill="none" stroke="#1a1a1a" stroke-width=".7" stroke-linejoin="round"/><path d="M6 3 V6.9 H2.4Z" fill="#8a8a8a"/></svg>
<div class="rb" style="left:45.0px;top:463.17px;width:116.7px"></div>
<div class="abs" style="left:45.2px;top:463.27px;width:2.2px;height:11.4px;background:#3fa9ea"></div>
<svg class="abs" style="left:49.9px;top:465.468px" width="10" height="7" viewBox="0 0 10 7"><path d="M.6 3.5 Q2.4 .7 5 .7 Q7.6 .7 9.4 3.5 Q7.6 6.3 5 6.3 Q2.4 6.3 .6 3.5Z" fill="#e2e2e2" stroke="#979797" stroke-width="1.35"/><circle cx="5" cy="3.5" r="1.9" fill="#909090"/><circle cx="5" cy="3.5" r=".65" fill="#d6d6d6"/></svg>
<svg class="abs" style="left:64.8px;top:463.268px" width="10" height="11" viewBox="0 0 10 11"><path d="M3.2 0 V2.8" stroke="#555" stroke-width=".9"/><path d="M1.8 1.8 H4.6 L3.2 3.6Z" fill="#555"/><path d="M1.2 3.4 H9.2 V7.8 L7 10.4 H2.2 Q1.2 10.3 1.2 9.2Z" fill="#f8f8f8" stroke="#666" stroke-width=".7"/><path d="M9.2 3.4 L7 5.4 V10.4 M7 5.4 H1.2" fill="none" stroke="#8a8a8a" stroke-width=".5"/></svg>
<div class="rt" style="left:68.8px;top:464.57px">Keyhole_Cap_Bottom:1</div>
<svg class="abs" style="left:45.2px;top:478.749px" width="6" height="9" viewBox="0 0 6 9"><path d="M.5 .5 L5.5 4.5 L.5 8.5Z" fill="#fbfbfb" stroke="#777" stroke-width=".5" stroke-linejoin="round"/></svg>
<div class="rb" style="left:56.0px;top:477.45px;width:60.9px"></div>
<svg class="abs" style="left:58.3px;top:479.749px" width="10" height="7" viewBox="0 0 10 7"><path d="M.4 3.5 Q5 -1.6 9.6 3.5 Q5 8.6 .4 3.5Z" fill="none" stroke="#ababab" stroke-width=".9" stroke-dasharray="2.2 .7"/><circle cx="5" cy="3.5" r="1.7" fill="none" stroke="#b0b0b0" stroke-width=".8"/><path d="M2 6.8 L8 .2" stroke="#b0b0b0" stroke-width=".8"/></svg>
<svg class="abs" style="left:72.9px;top:478.949px" width="9.2" height="8" viewBox="0 0 9.2 8"><path d="M0 .9 H3.3 L4.1 2 H9.2 V8 H0Z" fill="#ababab"/><path d="M0 3 H9.2" stroke="#c2c2c2" stroke-width=".5"/><rect x="4.9" y=".5" width="1" height="1.1" fill="#ababab"/><rect x="6.7" y=".5" width="1" height="1.1" fill="#ababab"/></svg>
<div class="rt" style="left:50.0px;top:478.85px">Origin</div>
<svg class="abs" style="left:45.2px;top:493.03px" width="6" height="9" viewBox="0 0 6 9"><path d="M.5 .5 L5.5 4.5 L.5 8.5Z" fill="#fbfbfb" stroke="#777" stroke-width=".5" stroke-linejoin="round"/></svg>
<div class="rb" style="left:56.0px;top:491.73px;width:60.9px"></div>
<svg class="abs" style="left:58.3px;top:494.03px" width="10" height="7" viewBox="0 0 10 7"><path d="M.6 3.5 Q2.4 .7 5 .7 Q7.6 .7 9.4 3.5 Q7.6 6.3 5 6.3 Q2.4 6.3 .6 3.5Z" fill="#e2e2e2" stroke="#979797" stroke-width="1.35"/><circle cx="5" cy="3.5" r="1.9" fill="#909090"/><circle cx="5" cy="3.5" r=".65" fill="#d6d6d6"/></svg>
<svg class="abs" style="left:72.9px;top:493.23px" width="9.2" height="8" viewBox="0 0 9.2 8"><path d="M0 .9 H3.3 L4.1 2 H9.2 V8 H0Z" fill="#ababab"/><path d="M0 3 H9.2" stroke="#c2c2c2" stroke-width=".5"/><rect x="4.9" y=".5" width="1" height="1.1" fill="#ababab"/><rect x="6.7" y=".5" width="1" height="1.1" fill="#ababab"/></svg>
<div class="rt" style="left:50.8px;top:493.13px">Bodies</div>
<svg class="abs" style="left:22.9px;top:507.611px" width="7" height="8" viewBox="0 0 7 8"><path d="M6.4 .7 V7.3 H.2Z" fill="#ddd"/><path d="M6.4 .7 V7.3 H.2Z" fill="none" stroke="#1a1a1a" stroke-width=".7" stroke-linejoin="round"/><path d="M6 3 V6.9 H2.4Z" fill="#8a8a8a"/></svg>
<div class="rb" style="left:34.4px;top:506.01px;width:88.3px"></div>
<div class="abs" style="left:34.6px;top:506.11px;width:2.2px;height:11.4px;background:#4fb0ea"></div>
<svg class="abs" style="left:39.3px;top:508.311px" width="10" height="7" viewBox="0 0 10 7"><path d="M.6 3.5 Q2.4 .7 5 .7 Q7.6 .7 9.4 3.5 Q7.6 6.3 5 6.3 Q2.4 6.3 .6 3.5Z" fill="#e2e2e2" stroke="#979797" stroke-width="1.35"/><circle cx="5" cy="3.5" r="1.9" fill="#909090"/><circle cx="5" cy="3.5" r=".65" fill="#d6d6d6"/></svg>
<svg class="abs" style="left:54.1px;top:506.311px" width="10" height="11" viewBox="0 0 10 11"><path d="M2.4 .8 H8.4 Q9.5 1 9.5 2.2 V7.4 L7.6 10.2 H2 Q.6 10 .5 8.6 V3 Q.8 1 2.4 .8Z" fill="#f5f5f5" stroke="#6f6f6f" stroke-width=".7"/><path d="M2 9.8 Q5 11.4 7.4 10" fill="none" stroke="#9a9a9a" stroke-width=".6"/><rect x="3" y="3.6" width="4" height="4" fill="#e6e6e6"/></svg>
<div class="rt" style="left:44.2px;top:507.41px">Ring_Holder:1</div>
<svg class="abs" style="left:34.8px;top:521.592px" width="6" height="9" viewBox="0 0 6 9"><path d="M.5 .5 L5.5 4.5 L.5 8.5Z" fill="#fbfbfb" stroke="#777" stroke-width=".5" stroke-linejoin="round"/></svg>
<div class="rb" style="left:45.0px;top:520.29px;width:61.6px"></div>
<svg class="abs" style="left:47.3px;top:522.592px" width="10" height="7" viewBox="0 0 10 7"><path d="M.4 3.5 Q5 -1.6 9.6 3.5 Q5 8.6 .4 3.5Z" fill="none" stroke="#ababab" stroke-width=".9" stroke-dasharray="2.2 .7"/><circle cx="5" cy="3.5" r="1.7" fill="none" stroke="#b0b0b0" stroke-width=".8"/><path d="M2 6.8 L8 .2" stroke="#b0b0b0" stroke-width=".8"/></svg>
<svg class="abs" style="left:61.9px;top:521.792px" width="9.2" height="8" viewBox="0 0 9.2 8"><path d="M0 .9 H3.3 L4.1 2 H9.2 V8 H0Z" fill="#ababab"/><path d="M0 3 H9.2" stroke="#c2c2c2" stroke-width=".5"/><rect x="4.9" y=".5" width="1" height="1.1" fill="#ababab"/><rect x="6.7" y=".5" width="1" height="1.1" fill="#ababab"/></svg>
<div class="rt" style="left:39.3px;top:521.69px">Origin</div>
<svg class="abs" style="left:33.9px;top:536.173px" width="7" height="8" viewBox="0 0 7 8"><path d="M6.4 .7 V7.3 H.2Z" fill="#ddd"/><path d="M6.4 .7 V7.3 H.2Z" fill="none" stroke="#1a1a1a" stroke-width=".7" stroke-linejoin="round"/><path d="M6 3 V6.9 H2.4Z" fill="#8a8a8a"/></svg>
<div class="rb" style="left:45.0px;top:534.57px;width:61.6px"></div>
<svg class="abs" style="left:47.3px;top:536.873px" width="10" height="7" viewBox="0 0 10 7"><path d="M.6 3.5 Q2.4 .7 5 .7 Q7.6 .7 9.4 3.5 Q7.6 6.3 5 6.3 Q2.4 6.3 .6 3.5Z" fill="#e2e2e2" stroke="#979797" stroke-width="1.35"/><circle cx="5" cy="3.5" r="1.9" fill="#909090"/><circle cx="5" cy="3.5" r=".65" fill="#d6d6d6"/></svg>
<svg class="abs" style="left:61.9px;top:536.073px" width="9.2" height="8" viewBox="0 0 9.2 8"><path d="M0 .9 H3.3 L4.1 2 H9.2 V8 H0Z" fill="#ababab"/><path d="M0 3 H9.2" stroke="#c2c2c2" stroke-width=".5"/><rect x="4.9" y=".5" width="1" height="1.1" fill="#ababab"/><rect x="6.7" y=".5" width="1" height="1.1" fill="#ababab"/></svg>
<div class="rt" style="left:39.9px;top:535.97px">Bodies</div>
<div class="rb" style="left:56.0px;top:548.85px;width:58.8px"></div>
<svg class="abs" style="left:58.3px;top:551.154px" width="10" height="7" viewBox="0 0 10 7"><path d="M.6 3.5 Q2.4 .7 5 .7 Q7.6 .7 9.4 3.5 Q7.6 6.3 5 6.3 Q2.4 6.3 .6 3.5Z" fill="#e2e2e2" stroke="#979797" stroke-width="1.35"/><circle cx="5" cy="3.5" r="1.9" fill="#909090"/><circle cx="5" cy="3.5" r=".65" fill="#d6d6d6"/></svg>
<svg class="abs" style="left:72.3px;top:549.154px" width="10" height="11" viewBox="0 0 10 11"><path d="M1.6 .8 H8.4 Q9.5 1 9.5 2.2 V8.6 Q9.4 10 8 10.2 H2 Q.6 10 .5 8.6 V2.2 Q.6 1 1.6 .8Z" fill="#f5f5f5" stroke="#5e5e5e" stroke-width=".85"/><path d="M1.5 9.6 Q5 11.4 8.5 9.6" fill="none" stroke="#9a9a9a" stroke-width=".6"/><path d="M4 4.4 V8 M4 6 H6.2 M4 8 H6.2" stroke="#c9c9c9" stroke-width=".6" fill="none"/></svg>
<div class="rt" style="left:49.8px;top:550.25px">Body6</div>
<div class="rb" style="left:56.0px;top:563.14px;width:58.8px"></div>
<svg class="abs" style="left:58.3px;top:565.435px" width="10" height="7" viewBox="0 0 10 7"><path d="M.6 3.5 Q2.4 .7 5 .7 Q7.6 .7 9.4 3.5 Q7.6 6.3 5 6.3 Q2.4 6.3 .6 3.5Z" fill="#e2e2e2" stroke="#979797" stroke-width="1.35"/><circle cx="5" cy="3.5" r="1.9" fill="#909090"/><circle cx="5" cy="3.5" r=".65" fill="#d6d6d6"/></svg>
<svg class="abs" style="left:72.3px;top:563.435px" width="10" height="11" viewBox="0 0 10 11"><path d="M1.6 .8 H8.4 Q9.5 1 9.5 2.2 V8.6 Q9.4 10 8 10.2 H2 Q.6 10 .5 8.6 V2.2 Q.6 1 1.6 .8Z" fill="#f5f5f5" stroke="#5e5e5e" stroke-width=".85"/><path d="M1.5 9.6 Q5 11.4 8.5 9.6" fill="none" stroke="#9a9a9a" stroke-width=".6"/><path d="M4 4.4 V8 M4 6 H6.2 M4 8 H6.2" stroke="#c9c9c9" stroke-width=".6" fill="none"/></svg>
<div class="rt" style="left:49.8px;top:564.54px">Body7</div>
<svg class="abs" style="left:33.9px;top:579.016px" width="7" height="8" viewBox="0 0 7 8"><path d="M6.4 .7 V7.3 H.2Z" fill="#ddd"/><path d="M6.4 .7 V7.3 H.2Z" fill="none" stroke="#1a1a1a" stroke-width=".7" stroke-linejoin="round"/><path d="M6 3 V6.9 H2.4Z" fill="#8a8a8a"/></svg>
<div class="rb" style="left:45.0px;top:577.42px;width:68.6px"></div>
<svg class="abs" style="left:47.3px;top:579.716px" width="10" height="7" viewBox="0 0 10 7"><path d="M.6 3.5 Q2.4 .7 5 .7 Q7.6 .7 9.4 3.5 Q7.6 6.3 5 6.3 Q2.4 6.3 .6 3.5Z" fill="#e2e2e2" stroke="#979797" stroke-width="1.35"/><circle cx="5" cy="3.5" r="1.9" fill="#909090"/><circle cx="5" cy="3.5" r=".65" fill="#d6d6d6"/></svg>
<svg class="abs" style="left:61.9px;top:578.916px" width="9.2" height="8" viewBox="0 0 9.2 8"><path d="M0 .9 H3.3 L4.1 2 H9.2 V8 H0Z" fill="#ababab"/><path d="M0 3 H9.2" stroke="#c2c2c2" stroke-width=".5"/><rect x="4.9" y=".5" width="1" height="1.1" fill="#ababab"/><rect x="6.7" y=".5" width="1" height="1.1" fill="#ababab"/></svg>
<div class="rt" style="left:43.4px;top:578.82px">Sketches</div>
<div class="rb" style="left:56.0px;top:591.70px;width:82.6px"></div>
<svg class="abs" style="left:58.3px;top:593.997px" width="10" height="7" viewBox="0 0 10 7"><path d="M.4 3.5 Q5 -1.6 9.6 3.5 Q5 8.6 .4 3.5Z" fill="none" stroke="#ababab" stroke-width=".9" stroke-dasharray="2.2 .7"/><circle cx="5" cy="3.5" r="1.7" fill="none" stroke="#b0b0b0" stroke-width=".8"/><path d="M2 6.8 L8 .2" stroke="#b0b0b0" stroke-width=".8"/></svg>
<svg class="abs" style="left:72.2px;top:591.897px" width="11" height="12" viewBox="0 0 11 12"><path d="M1.6 9 V1.6 H9 V4.6 M1.6 9 H4.6" fill="none" stroke="#7a7a7a" stroke-width=".6"/><path d="M.4 1.6 H2.8 M.4 9 H2.8 M7.8 1.6 H10.2 M1.6 .4 V2.8 M9 .4 V2.8 M1.6 7.8 V10.2" stroke="#6a6a6a" stroke-width=".6"/><path d="M8.3 5 L10.3 7.4 V10.3 H6.3 V7.4Z" fill="#f6a52f"/><rect x="7.1" y="8.1" width="2.4" height="1.2" fill="#fbcfa8"/><circle cx="6.8" cy="7.8" r=".4" fill="#444"/><circle cx="9.8" cy="7.8" r=".4" fill="#444"/><circle cx="6.8" cy="9.8" r=".4" fill="#444"/><circle cx="9.8" cy="9.8" r=".4" fill="#444"/></svg>
<div class="rt" style="left:61.9px;top:593.10px">Holder things</div>
<div class="rb" style="left:56.0px;top:605.98px;width:85.0px"></div>
<svg class="abs" style="left:58.3px;top:608.278px" width="10" height="7" viewBox="0 0 10 7"><path d="M.4 3.5 Q5 -1.6 9.6 3.5 Q5 8.6 .4 3.5Z" fill="none" stroke="#ababab" stroke-width=".9" stroke-dasharray="2.2 .7"/><circle cx="5" cy="3.5" r="1.7" fill="none" stroke="#b0b0b0" stroke-width=".8"/><path d="M2 6.8 L8 .2" stroke="#b0b0b0" stroke-width=".8"/></svg>
<svg class="abs" style="left:72.2px;top:606.178px" width="11" height="12" viewBox="0 0 11 12"><path d="M1.6 9 V1.6 H9 V4.6 M1.6 9 H4.6" fill="none" stroke="#7a7a7a" stroke-width=".6"/><path d="M.4 1.6 H2.8 M.4 9 H2.8 M7.8 1.6 H10.2 M1.6 .4 V2.8 M9 .4 V2.8 M1.6 7.8 V10.2" stroke="#6a6a6a" stroke-width=".6"/><path d="M8.3 5 L10.3 7.4 V10.3 H6.3 V7.4Z" fill="#f6a52f"/><rect x="7.1" y="8.1" width="2.4" height="1.2" fill="#fbcfa8"/><circle cx="6.8" cy="7.8" r=".4" fill="#444"/><circle cx="9.8" cy="7.8" r=".4" fill="#444"/><circle cx="6.8" cy="9.8" r=".4" fill="#444"/><circle cx="9.8" cy="9.8" r=".4" fill="#444"/></svg>
<div class="rt" style="left:62.9px;top:607.38px">D_plate_bores</div>
<div class="panel" style="left:2.3px;top:783.1px;width:178.7px;height:14.4px"></div>
<div class="ptxt" style="left:17.2px;top:785.6px;transform:scaleX(.9);color:#505050">COMMENTS</div>
<svg class="abs" style="left:167.5px;top:787px" width="6.6" height="6.6" viewBox="0 0 6.6 6.6"><circle cx="3.3" cy="3.3" r="3.1" fill="#222"/><path d="M1.5 3.3 H5.1 M3.3 1.5 V5.1" stroke="#eee" stroke-width="1"/></svg>
<div class="abs" style="left:691.2px;top:782px;width:140.8px;height:13.8px;background:#f4f4f4;border:0.5px dotted #cfcfcf;box-sizing:border-box"></div>
<svg class="abs" style="left:693.10px;top:784.50px" width="9" height="9" viewBox="0 0 9 9"><ellipse cx="4.5" cy="4.8" rx="4" ry="1.7" fill="none" stroke="#333" stroke-width=".8"/><path d="M4.5 .4 V8.8" stroke="#333" stroke-width=".8"/><path d="M4.5 0 l1.5 1.8 h-3z M4.5 9 l1.5 -1.8 h-3z" fill="#333"/><path d="M.3 4.4 l1.8 1.4 l-1.9 .8z" fill="#333"/></svg>
<svg class="abs" style="left:712.30px;top:784.70px" width="9.6" height="8.6" viewBox="0 0 9.6 8.6"><rect x=".8" y="2.2" width="8" height="5.8" rx="1" fill="#e4e4e4" stroke="#444" stroke-width=".8"/><rect x="2.6" y="3.9" width="4.4" height="2.4" fill="#fafafa" stroke="#555" stroke-width=".6"/><path d="M2.6 2 V.6 M4.8 2 V.6 M7 2 V.6" stroke="#444" stroke-width=".8"/></svg>
<svg class="abs" style="left:728.10px;top:784.00px" width="9" height="10" viewBox="0 0 9 10"><path d="M2.2 5.4 V2 Q2.8 1.2 3.4 2 V1.2 Q4 .4 4.7 1.2 V1 Q5.4 .3 6 1.2 V2 Q6.7 1.4 7.3 2.2 V6.4 Q7.2 9.4 4.8 9.5 Q3 9.5 2 7.6 L.6 5.4 Q.8 4.4 2.2 5.4Z" fill="#fafafa" stroke="#444" stroke-width=".7"/><path d="M3.4 2 V4.8 M4.7 1.2 V4.6 M6 1.4 V4.8" stroke="#444" stroke-width=".5"/></svg>
<svg class="abs" style="left:742.60px;top:784.30px" width="10" height="9.4" viewBox="0 0 10 9.4"><circle cx="3.6" cy="3.8" r="2.9" fill="#f6f6f6" stroke="#444" stroke-width=".9"/><path d="M5.8 6 L8.6 8.8" stroke="#333" stroke-width="1.3"/><path d="M8.2 .4 V3.6" stroke="#444" stroke-width=".6"/><path d="M8.2 0 l1 1.2 h-2z M8.2 4 l1 -1.2 h-2z" fill="#444"/></svg>
<svg class="abs" style="left:758.60px;top:784.20px" width="10" height="9.6" viewBox="0 0 10 9.6"><circle cx="4.2" cy="4" r="3.4" fill="#f0f0f0" stroke="#444" stroke-width=".9"/><circle cx="4.2" cy="4" r="2" fill="#ddd" stroke="#777" stroke-width=".6"/><path d="M6.8 6.6 L9.4 9.2" stroke="#333" stroke-width="1.4"/></svg>
<svg class="abs" style="left:778.80px;top:784.50px" width="9.6" height="9.6" viewBox="0 0 9.6 9.6"><rect x=".6" y=".6" width="8.4" height="6" fill="#bdbdbd" stroke="#666" stroke-width=".7"/><rect x="1.8" y="1.6" width="6" height="3.8" fill="#57aee8"/><path d="M3.4 6.6 V8.2 H6.2 V6.6 M2.2 8.8 H7.4" stroke="#555" stroke-width=".9" fill="none"/></svg>
<svg class="abs" style="left:797.10px;top:784.10px" width="9.8" height="9.8" viewBox="0 0 9.8 9.8"><rect x=".6" y=".6" width="8.6" height="8.6" fill="#d6d6d6"/><path d="M0.6 .6 V9.2 M.6 0.6 H9.2" stroke="#555" stroke-width=".45"/><path d="M2.05 .6 V9.2 M.6 2.05 H9.2" stroke="#555" stroke-width=".45"/><path d="M3.5 .6 V9.2 M.6 3.5 H9.2" stroke="#555" stroke-width=".45"/><path d="M4.95 .6 V9.2 M.6 4.95 H9.2" stroke="#555" stroke-width=".45"/><path d="M6.4 .6 V9.2 M.6 6.4 H9.2" stroke="#555" stroke-width=".45"/><path d="M7.85 .6 V9.2 M.6 7.85 H9.2" stroke="#555" stroke-width=".45"/><path d="M9.3 .6 V9.2 M.6 9.3 H9.2" stroke="#555" stroke-width=".45"/></svg>
<svg class="abs" style="left:815.00px;top:784.80px" width="9.6" height="8.4" viewBox="0 0 9.6 8.4"><rect x=".5" y=".5" width="8.6" height="7.4" fill="#6bb8ea" stroke="#444" stroke-width=".9"/><path d="M4.8 .5 V7.9 M.5 4.2 H9.1" stroke="#444" stroke-width=".9"/><path d="M1.2 1.2 H4.2 V3.6 H1.2Z M5.4 1.2 H8.4 V3.6 H5.4Z M1.2 4.8 H4.2 V7.2 H1.2Z M5.4 4.8 H8.4 V7.2 H5.4Z" fill="#a6d5f3"/></svg>
<svg class="abs" style="left:705.3px;top:787.9px" width="4" height="3" viewBox="0 0 4 3"><path d="M0 .2 H4 L2 2.8Z" fill="#1e1e1e"/></svg>
<svg class="abs" style="left:771.2px;top:787.9px" width="4" height="3" viewBox="0 0 4 3"><path d="M0 .2 H4 L2 2.8Z" fill="#1e1e1e"/></svg>
<svg class="abs" style="left:789.2px;top:787.9px" width="4" height="3" viewBox="0 0 4 3"><path d="M0 .2 H4 L2 2.8Z" fill="#1e1e1e"/></svg>
<svg class="abs" style="left:807.4px;top:787.9px" width="4" height="3" viewBox="0 0 4 3"><path d="M0 .2 H4 L2 2.8Z" fill="#1e1e1e"/></svg>
<svg class="abs" style="left:826.0px;top:787.9px" width="4" height="3" viewBox="0 0 4 3"><path d="M0 .2 H4 L2 2.8Z" fill="#1e1e1e"/></svg>
<div id="bottombar">
<svg class="abs" style="left:0;top:0" width="85" height="30" viewBox="0 800 85 30"><g fill="#5b5b5b"><rect x="6.2" y="811.3" width="1.4" height="9"/><path d="M13.2 811.3 V820.3 L7.6 815.8Z"/><path d="M27 811.6 V820 L21.2 815.8Z"/><rect x="26.6" y="813.9" width="2.2" height="3.8" fill="#8a8a8a"/><path d="M36 810.6 V821 L43.2 815.8Z"/><path d="M52 811.6 V820 L57.8 815.8Z"/><rect x="50.2" y="813.9" width="2.2" height="3.8" fill="#8a8a8a"/><path d="M66 811.3 V820.3 L71.6 815.8Z"/><rect x="71.6" y="811.3" width="1.4" height="9"/></g></svg>
<svg class="abs" style="left:0;top:25px" width="5" height="5" viewBox="0 0 5 5"><path d="M0 0 Q.3 4.7 5 5 H0Z" fill="#0a0a0a"/></svg>
</div>
<div class="abs" style="left:85.65px;top:806.2px;width:25.93px;height:3.5px;background:#df94ea"></div>
<div class="abs" style="left:114.21px;top:806.2px;width:11.65px;height:3.5px;background:#f7bfb2"></div>
<div class="abs" style="left:128.49px;top:806.2px;width:11.65px;height:3.5px;background:#df94ea"></div>
<div class="abs" style="left:142.77px;top:806.2px;width:11.65px;height:3.5px;background:#f5b95a"></div>
<div class="abs" style="left:157.06px;top:806.2px;width:11.65px;height:3.5px;background:#df94ea"></div>
<div class="abs" style="left:171.34px;top:806.2px;width:25.93px;height:3.5px;background:#5cb8ec"></div>
<div class="abs" style="left:199.90px;top:806.2px;width:11.65px;height:3.5px;background:#f5b95a"></div>
<div class="abs" style="left:214.18px;top:806.2px;width:11.65px;height:3.5px;background:#f7bfb2"></div>
<div class="abs" style="left:228.46px;top:806.2px;width:25.93px;height:3.5px;background:#5cb8ec"></div>
<div class="abs" style="left:257.02px;top:806.2px;width:5.85px;height:3.5px;background:#f5b95a"></div>
<div class="abs" style="left:262.82px;top:806.2px;width:5.85px;height:3.5px;background:#f7bfb2"></div>
<div class="abs" style="left:271.30px;top:806.2px;width:11.65px;height:3.5px;background:#5cb8ec"></div>
<div class="abs" style="left:285.58px;top:806.2px;width:3.92px;height:3.5px;background:#f7bfb2"></div>
<div class="abs" style="left:289.45px;top:806.2px;width:3.92px;height:3.5px;background:#f5b95a"></div>
<div class="abs" style="left:293.32px;top:806.2px;width:3.92px;height:3.5px;background:#5cb8ec"></div>
<div class="abs" style="left:299.87px;top:806.2px;width:11.65px;height:3.5px;background:#f5b95a"></div>
<div class="abs" style="left:314.15px;top:806.2px;width:3.92px;height:3.5px;background:#f7bfb2"></div>
<div class="abs" style="left:318.01px;top:806.2px;width:3.92px;height:3.5px;background:#f5b95a"></div>
<div class="abs" style="left:321.88px;top:806.2px;width:3.92px;height:3.5px;background:#5cb8ec"></div>
<div class="abs" style="left:328.43px;top:806.2px;width:25.93px;height:3.5px;background:#f7bfb2"></div>
<div class="abs" style="left:356.99px;top:806.2px;width:5.85px;height:3.5px;background:#f7bfb2"></div>
<div class="abs" style="left:362.79px;top:806.2px;width:5.85px;height:3.5px;background:#f5b95a"></div>
<div class="abs" style="left:371.27px;top:806.2px;width:54.49px;height:3.5px;background:#f7bfb2"></div>
<div class="abs" style="left:428.39px;top:806.2px;width:25.93px;height:3.5px;background:#f5b95a"></div>
<div class="abs" style="left:456.96px;top:806.2px;width:25.93px;height:3.5px;background:#f7bfb2"></div>
<div class="abs" style="left:485.52px;top:806.2px;width:5.85px;height:3.5px;background:#f5b95a"></div>
<div class="abs" style="left:491.32px;top:806.2px;width:5.85px;height:3.5px;background:#f7bfb2"></div>
<div class="abs" style="left:499.80px;top:806.2px;width:5.85px;height:3.5px;background:#f5b95a"></div>
<div class="abs" style="left:505.60px;top:806.2px;width:5.85px;height:3.5px;background:#5cb8ec"></div>
<div class="abs" style="left:514.08px;top:806.2px;width:3.92px;height:3.5px;background:#f7bfb2"></div>
<div class="abs" style="left:517.95px;top:806.2px;width:3.92px;height:3.5px;background:#f7bfb2"></div>
<div class="abs" style="left:521.81px;top:806.2px;width:3.92px;height:3.5px;background:#5cb8ec"></div>
<div class="abs" style="left:528.36px;top:806.2px;width:11.65px;height:3.5px;background:#df94ea"></div>
<div class="abs" style="left:542.64px;top:806.2px;width:25.93px;height:3.5px;background:#f7bfb2"></div>
<div class="abs" style="left:571.20px;top:806.2px;width:5.85px;height:3.5px;background:#f7bfb2"></div>
<div class="abs" style="left:577.00px;top:806.2px;width:5.85px;height:3.5px;background:#f5b95a"></div>
<div class="abs" style="left:585.49px;top:806.2px;width:11.65px;height:3.5px;background:#f5b95a"></div>
<div class="abs" style="left:599.77px;top:806.2px;width:25.93px;height:3.5px;background:#f7bfb2"></div>
<div class="abs" style="left:628.33px;top:806.2px;width:11.65px;height:3.5px;background:#f5b95a"></div>
<div class="abs" style="left:642.61px;top:806.2px;width:2.95px;height:3.5px;background:#f7bfb2"></div>
<div class="abs" style="left:645.51px;top:806.2px;width:2.95px;height:3.5px;background:#f7bfb2"></div>
<div class="abs" style="left:648.41px;top:806.2px;width:2.95px;height:3.5px;background:#f7bfb2"></div>
<div class="abs" style="left:651.31px;top:806.2px;width:2.95px;height:3.5px;background:#f5b95a"></div>
<div class="abs" style="left:656.89px;top:806.2px;width:11.65px;height:3.5px;background:#f5b95a"></div>
<div class="abs" style="left:671.17px;top:806.2px;width:68.77px;height:3.5px;background:#5cb8ec"></div>
<div class="abs" style="left:742.58px;top:806.2px;width:2.95px;height:3.5px;background:#f7bfb2"></div>
<div class="abs" style="left:745.48px;top:806.2px;width:2.95px;height:3.5px;background:#5cb8ec"></div>
<div class="abs" style="left:748.38px;top:806.2px;width:2.95px;height:3.5px;background:#f5b95a"></div>
<div class="abs" style="left:751.28px;top:806.2px;width:2.95px;height:3.5px;background:#f7bfb2"></div>
<div class="abs" style="left:756.86px;top:806.2px;width:5.85px;height:3.5px;background:#f7bfb2"></div>
<div class="abs" style="left:762.66px;top:806.2px;width:5.85px;height:3.5px;background:#5cb8ec"></div>
<div class="abs" style="left:771.14px;top:806.2px;width:5.85px;height:3.5px;background:#f7bfb2"></div>
<div class="abs" style="left:776.94px;top:806.2px;width:5.85px;height:3.5px;background:#5cb8ec"></div>
<div class="abs" style="left:92.2px;top:823.6px;width:685.5px;height:1px;background:#d2d2d2"></div>
<div class="abs" style="left:92.25px;top:820.6px;width:1px;height:3.5px;background:#cfcfcf"></div>
<svg class="abs" style="left:86.35px;top:810.80px" width="10.6" height="10.6" viewBox="0 0 10.6 10.6"><path d="M1 8.4 V1 H8.6 V4.8 M1 8.6 H4" fill="none" stroke="#555" stroke-width=".65"/><rect x=".2" y=".2" width="1.4" height="1.4" fill="#2d9be6"/><rect x="8" y=".2" width="1.4" height="1.4" fill="#2d9be6"/><rect x=".2" y="8" width="1.4" height="1.4" fill="#2d9be6"/><path d="M5 8.4 L9.2 4.8 L10.4 6 L6.2 9.6 L4.6 9.9Z" fill="#f4a63a"/><path d="M4.6 9.9 l.3 -1.1 l.8 .8z" fill="#555"/></svg>
<div class="abs" style="left:106.53px;top:820.6px;width:1px;height:3.5px;background:#cfcfcf"></div>
<svg class="abs" style="left:100.63px;top:810.80px" width="10.6" height="10.6" viewBox="0 0 10.6 10.6"><path d="M1 3.6 L3.4 1.2 H8 Q9.6 1.4 9.6 3 V7.4 L7.4 9.6 H2.4 Q1 9.4 1 8Z" fill="#eaeaea" stroke="#777" stroke-width=".6"/><path d="M1 3.6 H6 Q7.4 3.7 7.4 5 V9.6" fill="none" stroke="#8a8a8a" stroke-width=".5"/><circle cx="8" cy="2.4" r="2" fill="#f4a63a"/></svg>
<div class="abs" style="left:120.81px;top:820.6px;width:1px;height:3.5px;background:#cfcfcf"></div>
<svg class="abs" style="left:114.91px;top:810.80px" width="10.6" height="10.6" viewBox="0 0 10.6 10.6"><polygon points=".6,8.5 3,7 8,7 8,8.6 5.5,10 .6,10" fill="#c4c4c4"/><polygon points="0.4,2.1 1.9,0.4 8.2,0.4 6.7,2.1" fill="#a4d7f6"/><polygon points="6.7,2.1 8.2,0.4 8.2,7.1 6.7,8.8" fill="#3398dc"/><rect x="0.4" y="2.1" width="6.3" height="6.7" fill="#55b0ea"/><line x1="9.4" y1="1.6" x2="9.4" y2="7" stroke="#555" stroke-width=".6"/><circle cx="9.4" cy="1.4" r=".6" fill="#333"/></svg>
<div class="abs" style="left:135.09px;top:820.6px;width:1px;height:3.5px;background:#cfcfcf"></div>
<svg class="abs" style="left:129.19px;top:810.80px" width="10.6" height="10.6" viewBox="0 0 10.6 10.6"><path d="M1 3.6 L3.4 1.2 H8 Q9.6 1.4 9.6 3 V7.4 L7.4 9.6 H2.4 Q1 9.4 1 8Z" fill="#eaeaea" stroke="#777" stroke-width=".6"/><path d="M1 3.6 H6 Q7.4 3.7 7.4 5 V9.6" fill="none" stroke="#8a8a8a" stroke-width=".5"/><circle cx="8" cy="2.4" r="2" fill="#f4a63a"/></svg>
<div class="abs" style="left:149.37px;top:820.6px;width:1px;height:3.5px;background:#cfcfcf"></div>
<svg class="abs" style="left:143.47px;top:810.80px" width="10.6" height="10.6" viewBox="0 0 10.6 10.6"><polygon points=".6,8.5 3,7 8,7 8,8.6 5.5,10 .6,10" fill="#c4c4c4"/><polygon points="0.4,2.1 1.9,0.4 8.2,0.4 6.7,2.1" fill="#a4d7f6"/><polygon points="6.7,2.1 8.2,0.4 8.2,7.1 6.7,8.8" fill="#3398dc"/><rect x="0.4" y="2.1" width="6.3" height="6.7" fill="#55b0ea"/><line x1="9.4" y1="1.6" x2="9.4" y2="7" stroke="#555" stroke-width=".6"/><circle cx="9.4" cy="1.4" r=".6" fill="#333"/></svg>
<div class="abs" style="left:163.66px;top:820.6px;width:1px;height:3.5px;background:#cfcfcf"></div>
<svg class="abs" style="left:157.75px;top:810.80px" width="10.6" height="10.6" viewBox="0 0 10.6 10.6"><path d="M1 3.6 L3.4 1.2 H8 Q9.6 1.4 9.6 3 V7.4 L7.4 9.6 H2.4 Q1 9.4 1 8Z" fill="#eaeaea" stroke="#777" stroke-width=".6"/><path d="M1 3.6 H6 Q7.4 3.7 7.4 5 V9.6" fill="none" stroke="#8a8a8a" stroke-width=".5"/><circle cx="8" cy="2.4" r="2" fill="#f4a63a"/></svg>
<div class="abs" style="left:177.94px;top:820.6px;width:1px;height:3.5px;background:#cfcfcf"></div>
<svg class="abs" style="left:172.04px;top:810.80px" width="10.6" height="10.6" viewBox="0 0 10.6 10.6"><polygon points=".6,8.5 3,7 8,7 8,8.6 5.5,10 .6,10" fill="#c4c4c4"/><polygon points="0.4,2.1 1.9,0.4 8.2,0.4 6.7,2.1" fill="#a4d7f6"/><polygon points="6.7,2.1 8.2,0.4 8.2,7.1 6.7,8.8" fill="#3398dc"/><rect x="0.4" y="2.1" width="6.3" height="6.7" fill="#55b0ea"/><line x1="9.4" y1="1.6" x2="9.4" y2="7" stroke="#555" stroke-width=".6"/><circle cx="9.4" cy="1.4" r=".6" fill="#333"/></svg>
<div class="abs" style="left:192.22px;top:820.6px;width:1px;height:3.5px;background:#cfcfcf"></div>
<svg class="abs" style="left:186.32px;top:810.80px" width="10.6" height="10.6" viewBox="0 0 10.6 10.6"><path d="M1 8.4 V1 H8.6 V4.8 M1 8.6 H4" fill="none" stroke="#555" stroke-width=".65"/><rect x=".2" y=".2" width="1.4" height="1.4" fill="#2d9be6"/><rect x="8" y=".2" width="1.4" height="1.4" fill="#2d9be6"/><rect x=".2" y="8" width="1.4" height="1.4" fill="#2d9be6"/><path d="M5 8.4 L9.2 4.8 L10.4 6 L6.2 9.6 L4.6 9.9Z" fill="#f4a63a"/><path d="M4.6 9.9 l.3 -1.1 l.8 .8z" fill="#555"/></svg>
<div class="abs" style="left:206.50px;top:820.6px;width:1px;height:3.5px;background:#cfcfcf"></div>
<svg class="abs" style="left:200.60px;top:810.80px" width="10.6" height="10.6" viewBox="0 0 10.6 10.6"><polygon points=".6,8.5 3,7 8,7 8,8.6 5.5,10 .6,10" fill="#c4c4c4"/><polygon points="0.4,2.1 1.9,0.4 8.2,0.4 6.7,2.1" fill="#a4d7f6"/><polygon points="6.7,2.1 8.2,0.4 8.2,7.1 6.7,8.8" fill="#3398dc"/><rect x="0.4" y="2.1" width="6.3" height="6.7" fill="#55b0ea"/><line x1="9.4" y1="1.6" x2="9.4" y2="7" stroke="#555" stroke-width=".6"/><circle cx="9.4" cy="1.4" r=".6" fill="#333"/></svg>
<div class="abs" style="left:220.78px;top:820.6px;width:1px;height:3.5px;background:#cfcfcf"></div>
<svg class="abs" style="left:214.88px;top:810.80px" width="10.6" height="10.6" viewBox="0 0 10.6 10.6"><polygon points=".6,8.5 3,7 8,7 8,8.6 5.5,10 .6,10" fill="#c4c4c4"/><polygon points="0.4,2.1 1.9,0.4 8.2,0.4 6.7,2.1" fill="#a4d7f6"/><polygon points="6.7,2.1 8.2,0.4 8.2,7.1 6.7,8.8" fill="#3398dc"/><rect x="0.4" y="2.1" width="6.3" height="6.7" fill="#55b0ea"/><line x1="9.4" y1="1.6" x2="9.4" y2="7" stroke="#555" stroke-width=".6"/><circle cx="9.4" cy="1.4" r=".6" fill="#333"/></svg>
<div class="abs" style="left:235.06px;top:820.6px;width:1px;height:3.5px;background:#cfcfcf"></div>
<svg class="abs" style="left:229.16px;top:810.80px" width="10.6" height="10.6" viewBox="0 0 10.6 10.6"><polygon points=".6,8.5 3,7 8,7 8,8.6 5.5,10 .6,10" fill="#c4c4c4"/><polygon points="0.4,2.1 1.9,0.4 8.2,0.4 6.7,2.1" fill="#a4d7f6"/><polygon points="6.7,2.1 8.2,0.4 8.2,7.1 6.7,8.8" fill="#3398dc"/><rect x="0.4" y="2.1" width="6.3" height="6.7" fill="#55b0ea"/><line x1="9.4" y1="1.6" x2="9.4" y2="7" stroke="#555" stroke-width=".6"/><circle cx="9.4" cy="1.4" r=".6" fill="#333"/></svg>
<div class="abs" style="left:249.34px;top:820.6px;width:1px;height:3.5px;background:#cfcfcf"></div>
<svg class="abs" style="left:243.44px;top:810.80px" width="10.6" height="10.6" viewBox="0 0 10.6 10.6"><polygon points=".6,8.5 3,7 8,7 8,8.6 5.5,10 .6,10" fill="#c4c4c4"/><polygon points="0.4,2.1 1.9,0.4 8.2,0.4 6.7,2.1" fill="#a4d7f6"/><polygon points="6.7,2.1 8.2,0.4 8.2,7.1 6.7,8.8" fill="#3398dc"/><rect x="0.4" y="2.1" width="6.3" height="6.7" fill="#55b0ea"/><line x1="9.4" y1="1.6" x2="9.4" y2="7" stroke="#555" stroke-width=".6"/><circle cx="9.4" cy="1.4" r=".6" fill="#333"/></svg>
<div class="abs" style="left:263.62px;top:820.6px;width:1px;height:3.5px;background:#cfcfcf"></div>
<svg class="abs" style="left:257.72px;top:810.80px" width="10.6" height="10.6" viewBox="0 0 10.6 10.6"><rect x="3.4" y=".6" width="6.2" height="6" fill="#e6e6e6" stroke="#555" stroke-width=".7"/><rect x=".6" y="3.2" width="6.2" height="6.2" fill="#dcdcdc" stroke="#555" stroke-width=".7"/><path d="M6.8 .6 H9.6 V3 H6.8Z" fill="#3d9fe2"/></svg>
<div class="abs" style="left:277.90px;top:820.6px;width:1px;height:3.5px;background:#cfcfcf"></div>
<svg class="abs" style="left:272.00px;top:810.80px" width="10.6" height="10.6" viewBox="0 0 10.6 10.6"><path d="M1 8.4 V1 H8.6 V4.8 M1 8.6 H4" fill="none" stroke="#555" stroke-width=".65"/><rect x=".2" y=".2" width="1.4" height="1.4" fill="#2d9be6"/><rect x="8" y=".2" width="1.4" height="1.4" fill="#2d9be6"/><rect x=".2" y="8" width="1.4" height="1.4" fill="#2d9be6"/><path d="M5 8.4 L9.2 4.8 L10.4 6 L6.2 9.6 L4.6 9.9Z" fill="#f4a63a"/><path d="M4.6 9.9 l.3 -1.1 l.8 .8z" fill="#555"/></svg>
<div class="abs" style="left:292.18px;top:820.6px;width:1px;height:3.5px;background:#cfcfcf"></div>
<svg class="abs" style="left:286.28px;top:810.80px" width="10.6" height="10.6" viewBox="0 0 10.6 10.6"><path d="M.6 2.6 L2.4 .6 H9.6 V7.6 L7.8 9.6 H.6Z" fill="#d9d9d9" stroke="#6a6a6a" stroke-width=".6"/><path d="M.6 2.6 H7.8 V9.6 M7.8 2.6 L9.6 .6" fill="none" stroke="#6a6a6a" stroke-width=".5"/><circle cx="4.2" cy="6.1" r="2.7" fill="#c0c0c0" stroke="#666" stroke-width=".5"/><circle cx="4.2" cy="6.1" r="1.9" fill="#3d9fe2"/><path d="M3 4.8 A1.9 1.9 0 0 1 6 5.7 A2.3 2.3 0 0 0 3 4.8Z" fill="#eaf5fc"/></svg>
<div class="abs" style="left:306.47px;top:820.6px;width:1px;height:3.5px;background:#cfcfcf"></div>
<svg class="abs" style="left:300.56px;top:810.80px" width="10.6" height="10.6" viewBox="0 0 10.6 10.6"><path d="M1 8.4 V1 H8.6 V4.8 M1 8.6 H4" fill="none" stroke="#555" stroke-width=".65"/><rect x=".2" y=".2" width="1.4" height="1.4" fill="#2d9be6"/><rect x="8" y=".2" width="1.4" height="1.4" fill="#2d9be6"/><rect x=".2" y="8" width="1.4" height="1.4" fill="#2d9be6"/><path d="M5 8.4 L9.2 4.8 L10.4 6 L6.2 9.6 L4.6 9.9Z" fill="#f4a63a"/><path d="M4.6 9.9 l.3 -1.1 l.8 .8z" fill="#555"/></svg>
<div class="abs" style="left:320.75px;top:820.6px;width:1px;height:3.5px;background:#cfcfcf"></div>
<svg class="abs" style="left:314.85px;top:810.80px" width="10.6" height="10.6" viewBox="0 0 10.6 10.6"><path d="M.6 2.6 L2.4 .6 H9.6 V7.6 L7.8 9.6 H.6Z" fill="#d9d9d9" stroke="#6a6a6a" stroke-width=".6"/><path d="M.6 2.6 H7.8 V9.6 M7.8 2.6 L9.6 .6" fill="none" stroke="#6a6a6a" stroke-width=".5"/><circle cx="4.2" cy="6.1" r="2.7" fill="#c0c0c0" stroke="#666" stroke-width=".5"/><circle cx="4.2" cy="6.1" r="1.9" fill="#3d9fe2"/><path d="M3 4.8 A1.9 1.9 0 0 1 6 5.7 A2.3 2.3 0 0 0 3 4.8Z" fill="#eaf5fc"/></svg>
<div class="abs" style="left:335.03px;top:820.6px;width:1px;height:3.5px;background:#cfcfcf"></div>
<svg class="abs" style="left:329.13px;top:810.80px" width="10.6" height="10.6" viewBox="0 0 10.6 10.6"><path d="M1 8.4 V1 H8.6 V4.8 M1 8.6 H4" fill="none" stroke="#555" stroke-width=".65"/><rect x=".2" y=".2" width="1.4" height="1.4" fill="#2d9be6"/><rect x="8" y=".2" width="1.4" height="1.4" fill="#2d9be6"/><rect x=".2" y="8" width="1.4" height="1.4" fill="#2d9be6"/><path d="M5 8.4 L9.2 4.8 L10.4 6 L6.2 9.6 L4.6 9.9Z" fill="#f4a63a"/><path d="M4.6 9.9 l.3 -1.1 l.8 .8z" fill="#555"/></svg>
<div class="abs" style="left:349.31px;top:820.6px;width:1px;height:3.5px;background:#cfcfcf"></div>
<svg class="abs" style="left:343.41px;top:810.80px" width="10.6" height="10.6" viewBox="0 0 10.6 10.6"><polygon points=".6,8.5 3,7 8,7 8,8.6 5.5,10 .6,10" fill="#c4c4c4"/><polygon points="0.4,2.1 1.9,0.4 8.2,0.4 6.7,2.1" fill="#a4d7f6"/><polygon points="6.7,2.1 8.2,0.4 8.2,7.1 6.7,8.8" fill="#3398dc"/><rect x="0.4" y="2.1" width="6.3" height="6.7" fill="#55b0ea"/><line x1="9.4" y1="1.6" x2="9.4" y2="7" stroke="#555" stroke-width=".6"/><circle cx="9.4" cy="1.4" r=".6" fill="#333"/></svg>
<div class="abs" style="left:363.59px;top:820.6px;width:1px;height:3.5px;background:#cfcfcf"></div>
<svg class="abs" style="left:357.69px;top:810.80px" width="10.6" height="10.6" viewBox="0 0 10.6 10.6"><path d="M.6 2.6 L2.4 .6 H9.6 V7.6 L7.8 9.6 H.6Z" fill="#d9d9d9" stroke="#6a6a6a" stroke-width=".6"/><path d="M.6 2.6 H7.8 V9.6 M7.8 2.6 L9.6 .6" fill="none" stroke="#6a6a6a" stroke-width=".5"/><circle cx="4.2" cy="6.1" r="2.7" fill="#c0c0c0" stroke="#666" stroke-width=".5"/><circle cx="4.2" cy="6.1" r="1.9" fill="#3d9fe2"/><path d="M3 4.8 A1.9 1.9 0 0 1 6 5.7 A2.3 2.3 0 0 0 3 4.8Z" fill="#eaf5fc"/></svg>
<div class="abs" style="left:377.87px;top:820.6px;width:1px;height:3.5px;background:#cfcfcf"></div>
<svg class="abs" style="left:371.97px;top:810.80px" width="10.6" height="10.6" viewBox="0 0 10.6 10.6"><path d="M1 3.6 L3.4 1.2 H8 Q9.6 1.4 9.6 3 V7.4 L7.4 9.6 H2.4 Q1 9.4 1 8Z" fill="#eaeaea" stroke="#777" stroke-width=".6"/><path d="M1 3.6 H6 Q7.4 3.7 7.4 5 V9.6" fill="none" stroke="#8a8a8a" stroke-width=".5"/><circle cx="8" cy="2.4" r="2" fill="#f4a63a"/></svg>
<div class="abs" style="left:392.15px;top:820.6px;width:1px;height:3.5px;background:#cfcfcf"></div>
<svg class="abs" style="left:386.25px;top:810.80px" width="10.6" height="10.6" viewBox="0 0 10.6 10.6"><polygon points=".6,8.5 3,7 8,7 8,8.6 5.5,10 .6,10" fill="#c4c4c4"/><polygon points="0.4,2.1 1.9,0.4 8.2,0.4 6.7,2.1" fill="#a4d7f6"/><polygon points="6.7,2.1 8.2,0.4 8.2,7.1 6.7,8.8" fill="#3398dc"/><rect x="0.4" y="2.1" width="6.3" height="6.7" fill="#55b0ea"/><line x1="9.4" y1="1.6" x2="9.4" y2="7" stroke="#555" stroke-width=".6"/><circle cx="9.4" cy="1.4" r=".6" fill="#333"/></svg>
<div class="abs" style="left:406.43px;top:820.6px;width:1px;height:3.5px;background:#cfcfcf"></div>
<svg class="abs" style="left:400.53px;top:810.80px" width="10.6" height="10.6" viewBox="0 0 10.6 10.6"><polygon points=".6,8.5 3,7 8,7 8,8.6 5.5,10 .6,10" fill="#c4c4c4"/><polygon points="0.4,2.1 1.9,0.4 8.2,0.4 6.7,2.1" fill="#a4d7f6"/><polygon points="6.7,2.1 8.2,0.4 8.2,7.1 6.7,8.8" fill="#3398dc"/><rect x="0.4" y="2.1" width="6.3" height="6.7" fill="#55b0ea"/><line x1="9.4" y1="1.6" x2="9.4" y2="7" stroke="#555" stroke-width=".6"/><circle cx="9.4" cy="1.4" r=".6" fill="#333"/></svg>
<div class="abs" style="left:420.71px;top:820.6px;width:1px;height:3.5px;background:#cfcfcf"></div>
<svg class="abs" style="left:414.81px;top:810.80px" width="10.6" height="10.6" viewBox="0 0 10.6 10.6"><polygon points=".6,8.5 3,7 8,7 8,8.6 5.5,10 .6,10" fill="#c4c4c4"/><polygon points="0.4,2.1 1.9,0.4 8.2,0.4 6.7,2.1" fill="#a4d7f6"/><polygon points="6.7,2.1 8.2,0.4 8.2,7.1 6.7,8.8" fill="#3398dc"/><rect x="0.4" y="2.1" width="6.3" height="6.7" fill="#55b0ea"/><line x1="9.4" y1="1.6" x2="9.4" y2="7" stroke="#555" stroke-width=".6"/><circle cx="9.4" cy="1.4" r=".6" fill="#333"/></svg>
<div class="abs" style="left:434.99px;top:820.6px;width:1px;height:3.5px;background:#cfcfcf"></div>
<svg class="abs" style="left:429.09px;top:810.80px" width="10.6" height="10.6" viewBox="0 0 10.6 10.6"><path d="M1 8.4 V1 H8.6 V4.8 M1 8.6 H4" fill="none" stroke="#555" stroke-width=".65"/><rect x=".2" y=".2" width="1.4" height="1.4" fill="#2d9be6"/><rect x="8" y=".2" width="1.4" height="1.4" fill="#2d9be6"/><rect x=".2" y="8" width="1.4" height="1.4" fill="#2d9be6"/><path d="M5 8.4 L9.2 4.8 L10.4 6 L6.2 9.6 L4.6 9.9Z" fill="#f4a63a"/><path d="M4.6 9.9 l.3 -1.1 l.8 .8z" fill="#555"/></svg>
<div class="abs" style="left:449.28px;top:820.6px;width:1px;height:3.5px;background:#cfcfcf"></div>
<svg class="abs" style="left:443.38px;top:810.80px" width="10.6" height="10.6" viewBox="0 0 10.6 10.6"><polygon points=".6,8.5 3,7 8,7 8,8.6 5.5,10 .6,10" fill="#c4c4c4"/><polygon points="0.4,2.1 1.9,0.4 8.2,0.4 6.7,2.1" fill="#a4d7f6"/><polygon points="6.7,2.1 8.2,0.4 8.2,7.1 6.7,8.8" fill="#3398dc"/><rect x="0.4" y="2.1" width="6.3" height="6.7" fill="#55b0ea"/><line x1="9.4" y1="1.6" x2="9.4" y2="7" stroke="#555" stroke-width=".6"/><circle cx="9.4" cy="1.4" r=".6" fill="#333"/></svg>
<div class="abs" style="left:463.56px;top:820.6px;width:1px;height:3.5px;background:#cfcfcf"></div>
<svg class="abs" style="left:457.66px;top:810.80px" width="10.6" height="10.6" viewBox="0 0 10.6 10.6"><path d="M1 8.4 V1 H8.6 V4.8 M1 8.6 H4" fill="none" stroke="#555" stroke-width=".65"/><rect x=".2" y=".2" width="1.4" height="1.4" fill="#2d9be6"/><rect x="8" y=".2" width="1.4" height="1.4" fill="#2d9be6"/><rect x=".2" y="8" width="1.4" height="1.4" fill="#2d9be6"/><path d="M5 8.4 L9.2 4.8 L10.4 6 L6.2 9.6 L4.6 9.9Z" fill="#f4a63a"/><path d="M4.6 9.9 l.3 -1.1 l.8 .8z" fill="#555"/></svg>
<div class="abs" style="left:477.84px;top:820.6px;width:1px;height:3.5px;background:#cfcfcf"></div>
<svg class="abs" style="left:471.94px;top:810.80px" width="10.6" height="10.6" viewBox="0 0 10.6 10.6"><polygon points=".6,8.5 3,7 8,7 8,8.6 5.5,10 .6,10" fill="#c4c4c4"/><polygon points="0.4,2.1 1.9,0.4 8.2,0.4 6.7,2.1" fill="#a4d7f6"/><polygon points="6.7,2.1 8.2,0.4 8.2,7.1 6.7,8.8" fill="#3398dc"/><rect x="0.4" y="2.1" width="6.3" height="6.7" fill="#55b0ea"/><line x1="9.4" y1="1.6" x2="9.4" y2="7" stroke="#555" stroke-width=".6"/><circle cx="9.4" cy="1.4" r=".6" fill="#333"/></svg>
<div class="abs" style="left:492.12px;top:820.6px;width:1px;height:3.5px;background:#cfcfcf"></div>
<svg class="abs" style="left:486.22px;top:810.80px" width="10.6" height="10.6" viewBox="0 0 10.6 10.6"><path d="M.6 3.4 L2.6 1 H6 Q9.4 1.6 9.6 5 V7.6 L7.6 9.6 H.6Z" fill="#e4e4e4" stroke="#777" stroke-width=".6"/><path d="M.6 3.4 H4.4 Q7.4 4 7.6 7 V9.6" fill="none" stroke="#8a8a8a" stroke-width=".5"/><path d="M4.6 1.2 Q9 1.6 9.4 5.6 L7.6 6.6 Q7.2 4 4.4 3.4Z" fill="#cfcfcf"/></svg>
<div class="abs" style="left:506.40px;top:820.6px;width:1px;height:3.5px;background:#cfcfcf"></div>
<svg class="abs" style="left:500.50px;top:810.80px" width="10.6" height="10.6" viewBox="0 0 10.6 10.6"><path d="M.6 2.6 L2.4 .6 H9.6 V7.6 L7.8 9.6 H.6Z" fill="#d9d9d9" stroke="#6a6a6a" stroke-width=".6"/><path d="M.6 2.6 H7.8 V9.6 M7.8 2.6 L9.6 .6" fill="none" stroke="#6a6a6a" stroke-width=".5"/><circle cx="4.2" cy="6.1" r="2.7" fill="#c0c0c0" stroke="#666" stroke-width=".5"/><circle cx="4.2" cy="6.1" r="1.9" fill="#3d9fe2"/><path d="M3 4.8 A1.9 1.9 0 0 1 6 5.7 A2.3 2.3 0 0 0 3 4.8Z" fill="#eaf5fc"/></svg>
<div class="abs" style="left:520.68px;top:820.6px;width:1px;height:3.5px;background:#cfcfcf"></div>
<svg class="abs" style="left:514.78px;top:810.80px" width="10.6" height="10.6" viewBox="0 0 10.6 10.6"><path d="M.6 4 L4 .8 H8 L9.6 2.6 V7.6 L7.6 9.6 H.6Z" fill="#e4e4e4" stroke="#666" stroke-width=".6"/><path d="M.6 4 L4 .8 L7.6 4.4 L4.2 6.4Z" fill="#3d9fe2" opacity=".85"/><path d="M.6 4 H5 L7.6 6 V9.6" fill="none" stroke="#8a8a8a" stroke-width=".5"/></svg>
<div class="abs" style="left:534.96px;top:820.6px;width:1px;height:3.5px;background:#cfcfcf"></div>
<svg class="abs" style="left:529.06px;top:810.80px" width="10.6" height="10.6" viewBox="0 0 10.6 10.6"><path d="M.6 4.5 Q1 2 4.2 1.6 V9.2 L.6 8.4Z" fill="#dedede" stroke="#777" stroke-width=".6"/><path d="M5.8 1.6 Q9 2 9.6 4.5 V8.4 L5.8 9.2Z" fill="#dedede" stroke="#777" stroke-width=".6"/><path d="M4 .4 L6 1.6 V10 L4 8.8Z" fill="#f4a63a"/></svg>
<div class="abs" style="left:549.24px;top:820.6px;width:1px;height:3.5px;background:#cfcfcf"></div>
<svg class="abs" style="left:543.34px;top:810.80px" width="10.6" height="10.6" viewBox="0 0 10.6 10.6"><path d="M.6 4.5 Q1 2 4.2 1.6 V9.2 L.6 8.4Z" fill="#dedede" stroke="#777" stroke-width=".6"/><path d="M5.8 1.6 Q9 2 9.6 4.5 V8.4 L5.8 9.2Z" fill="#dedede" stroke="#777" stroke-width=".6"/><path d="M4 .4 L6 1.6 V10 L4 8.8Z" fill="#f4a63a"/></svg>
<div class="abs" style="left:563.52px;top:820.6px;width:1px;height:3.5px;background:#cfcfcf"></div>
<svg class="abs" style="left:557.62px;top:810.80px" width="10.6" height="10.6" viewBox="0 0 10.6 10.6"><path d="M1 8.4 V1 H8.6 V4.8 M1 8.6 H4" fill="none" stroke="#555" stroke-width=".65"/><rect x=".2" y=".2" width="1.4" height="1.4" fill="#2d9be6"/><rect x="8" y=".2" width="1.4" height="1.4" fill="#2d9be6"/><rect x=".2" y="8" width="1.4" height="1.4" fill="#2d9be6"/><path d="M5 8.4 L9.2 4.8 L10.4 6 L6.2 9.6 L4.6 9.9Z" fill="#f4a63a"/><path d="M4.6 9.9 l.3 -1.1 l.8 .8z" fill="#555"/></svg>
<div class="abs" style="left:577.80px;top:820.6px;width:1px;height:3.5px;background:#cfcfcf"></div>
<svg class="abs" style="left:571.90px;top:810.80px" width="10.6" height="10.6" viewBox="0 0 10.6 10.6"><path d="M.4 6 Q.4 2.6 5 2.2 Q9.8 2.6 9.8 6 V8.4 Q8 7 5 7 Q2 7 .4 8.4Z" fill="#3d9fe2"/><path d="M.4 6 Q2 4.6 5 4.6 Q8 4.6 9.8 6" fill="none" stroke="#bfe1f7" stroke-width=".7"/><path d="M2.2 1.8 Q5 .2 7.8 1.8" fill="none" stroke="#2a86c8" stroke-width=".7"/><rect x="3.4" y="5.6" width="3.2" height="3" fill="#e6eef4" stroke="#2a86c8" stroke-width=".4"/></svg>
<div class="abs" style="left:592.09px;top:820.6px;width:1px;height:3.5px;background:#cfcfcf"></div>
<svg class="abs" style="left:586.19px;top:810.80px" width="10.6" height="10.6" viewBox="0 0 10.6 10.6"><path d="M.4 6 Q.4 2.6 5 2.2 Q9.8 2.6 9.8 6 V8.4 Q8 7 5 7 Q2 7 .4 8.4Z" fill="#3d9fe2"/><path d="M.4 6 Q2 4.6 5 4.6 Q8 4.6 9.8 6" fill="none" stroke="#bfe1f7" stroke-width=".7"/><path d="M2.2 1.8 Q5 .2 7.8 1.8" fill="none" stroke="#2a86c8" stroke-width=".7"/><rect x="3.4" y="5.6" width="3.2" height="3" fill="#e6eef4" stroke="#2a86c8" stroke-width=".4"/></svg>
<div class="abs" style="left:606.37px;top:820.6px;width:1px;height:3.5px;background:#cfcfcf"></div>
<svg class="abs" style="left:600.47px;top:810.80px" width="10.6" height="10.6" viewBox="0 0 10.6 10.6"><path d="M.4 6 Q.4 2.6 5 2.2 Q9.8 2.6 9.8 6 V8.4 Q8 7 5 7 Q2 7 .4 8.4Z" fill="#3d9fe2"/><path d="M.4 6 Q2 4.6 5 4.6 Q8 4.6 9.8 6" fill="none" stroke="#bfe1f7" stroke-width=".7"/><path d="M2.2 1.8 Q5 .2 7.8 1.8" fill="none" stroke="#2a86c8" stroke-width=".7"/><rect x="3.4" y="5.6" width="3.2" height="3" fill="#e6eef4" stroke="#2a86c8" stroke-width=".4"/></svg>
<div class="abs" style="left:620.65px;top:820.6px;width:1px;height:3.5px;background:#cfcfcf"></div>
<svg class="abs" style="left:614.75px;top:810.80px" width="10.6" height="10.6" viewBox="0 0 10.6 10.6"><path d="M.4 6 Q.4 2.6 5 2.2 Q9.8 2.6 9.8 6 V8.4 Q8 7 5 7 Q2 7 .4 8.4Z" fill="#3d9fe2"/><path d="M.4 6 Q2 4.6 5 4.6 Q8 4.6 9.8 6" fill="none" stroke="#bfe1f7" stroke-width=".7"/><path d="M2.2 1.8 Q5 .2 7.8 1.8" fill="none" stroke="#2a86c8" stroke-width=".7"/><rect x="3.4" y="5.6" width="3.2" height="3" fill="#e6eef4" stroke="#2a86c8" stroke-width=".4"/></svg>
<div class="abs" style="left:634.93px;top:820.6px;width:1px;height:3.5px;background:#cfcfcf"></div>
<svg class="abs" style="left:629.03px;top:810.80px" width="10.6" height="10.6" viewBox="0 0 10.6 10.6"><path d="M.4 6 Q.4 2.6 5 2.2 Q9.8 2.6 9.8 6 V8.4 Q8 7 5 7 Q2 7 .4 8.4Z" fill="#3d9fe2"/><path d="M.4 6 Q2 4.6 5 4.6 Q8 4.6 9.8 6" fill="none" stroke="#bfe1f7" stroke-width=".7"/><path d="M2.2 1.8 Q5 .2 7.8 1.8" fill="none" stroke="#2a86c8" stroke-width=".7"/><rect x="3.4" y="5.6" width="3.2" height="3" fill="#e6eef4" stroke="#2a86c8" stroke-width=".4"/></svg>
<div class="abs" style="left:649.21px;top:820.6px;width:1px;height:3.5px;background:#cfcfcf"></div>
<svg class="abs" style="left:643.31px;top:810.80px" width="10.6" height="10.6" viewBox="0 0 10.6 10.6"><rect x="7.75" y="4.15" width="1.7" height="1.7" fill="#3d9fe2"/><rect x="6.70" y="6.70" width="1.7" height="1.7" fill="#3d9fe2"/><rect x="4.15" y="7.75" width="1.7" height="1.7" fill="#3d9fe2"/><rect x="1.60" y="6.70" width="1.7" height="1.7" fill="#3d9fe2"/><rect x="0.55" y="4.15" width="1.7" height="1.7" fill="#3d9fe2"/><rect x="1.60" y="1.60" width="1.7" height="1.7" fill="#3d9fe2"/><rect x="4.15" y="0.55" width="1.7" height="1.7" fill="#3d9fe2"/><rect x="6.70" y="1.60" width="1.7" height="1.7" fill="#3d9fe2"/></svg>
<div class="abs" style="left:663.49px;top:820.6px;width:1px;height:3.5px;background:#cfcfcf"></div>
<svg class="abs" style="left:657.59px;top:810.80px" width="10.6" height="10.6" viewBox="0 0 10.6 10.6"><path d="M1 3.6 L3.4 1.2 H8 Q9.6 1.4 9.6 3 V7.4 L7.4 9.6 H2.4 Q1 9.4 1 8Z" fill="#eaeaea" stroke="#777" stroke-width=".6"/><path d="M1 3.6 H6 Q7.4 3.7 7.4 5 V9.6" fill="none" stroke="#8a8a8a" stroke-width=".5"/><circle cx="8" cy="2.4" r="2" fill="#f4a63a"/></svg>
<div class="abs" style="left:677.77px;top:820.6px;width:1px;height:3.5px;background:#cfcfcf"></div>
<svg class="abs" style="left:671.87px;top:810.80px" width="10.6" height="10.6" viewBox="0 0 10.6 10.6"><polygon points=".6,8.5 3,7 8,7 8,8.6 5.5,10 .6,10" fill="#c4c4c4"/><polygon points="0.4,2.1 1.9,0.4 8.2,0.4 6.7,2.1" fill="#a4d7f6"/><polygon points="6.7,2.1 8.2,0.4 8.2,7.1 6.7,8.8" fill="#3398dc"/><rect x="0.4" y="2.1" width="6.3" height="6.7" fill="#55b0ea"/><line x1="9.4" y1="1.6" x2="9.4" y2="7" stroke="#555" stroke-width=".6"/><circle cx="9.4" cy="1.4" r=".6" fill="#333"/></svg>
<div class="abs" style="left:692.05px;top:820.6px;width:1px;height:3.5px;background:#cfcfcf"></div>
<svg class="abs" style="left:686.15px;top:810.80px" width="10.6" height="10.6" viewBox="0 0 10.6 10.6"><polygon points=".6,8.5 3,7 8,7 8,8.6 5.5,10 .6,10" fill="#c4c4c4"/><polygon points="0.4,2.1 1.9,0.4 8.2,0.4 6.7,2.1" fill="#a4d7f6"/><polygon points="6.7,2.1 8.2,0.4 8.2,7.1 6.7,8.8" fill="#3398dc"/><rect x="0.4" y="2.1" width="6.3" height="6.7" fill="#55b0ea"/><line x1="9.4" y1="1.6" x2="9.4" y2="7" stroke="#555" stroke-width=".6"/><circle cx="9.4" cy="1.4" r=".6" fill="#333"/></svg>
<div class="abs" style="left:706.33px;top:820.6px;width:1px;height:3.5px;background:#cfcfcf"></div>
<svg class="abs" style="left:700.43px;top:810.80px" width="10.6" height="10.6" viewBox="0 0 10.6 10.6"><polygon points=".6,8.5 3,7 8,7 8,8.6 5.5,10 .6,10" fill="#c4c4c4"/><polygon points="0.4,2.1 1.9,0.4 8.2,0.4 6.7,2.1" fill="#a4d7f6"/><polygon points="6.7,2.1 8.2,0.4 8.2,7.1 6.7,8.8" fill="#3398dc"/><rect x="0.4" y="2.1" width="6.3" height="6.7" fill="#55b0ea"/><line x1="9.4" y1="1.6" x2="9.4" y2="7" stroke="#555" stroke-width=".6"/><circle cx="9.4" cy="1.4" r=".6" fill="#333"/></svg>
<div class="abs" style="left:720.61px;top:820.6px;width:1px;height:3.5px;background:#cfcfcf"></div>
<svg class="abs" style="left:714.71px;top:810.80px" width="10.6" height="10.6" viewBox="0 0 10.6 10.6"><path d="M.4 6 Q.4 2.6 5 2.2 Q9.8 2.6 9.8 6 V8.4 Q8 7 5 7 Q2 7 .4 8.4Z" fill="#3d9fe2"/><path d="M.4 6 Q2 4.6 5 4.6 Q8 4.6 9.8 6" fill="none" stroke="#bfe1f7" stroke-width=".7"/><path d="M2.2 1.8 Q5 .2 7.8 1.8" fill="none" stroke="#2a86c8" stroke-width=".7"/><rect x="3.4" y="5.6" width="3.2" height="3" fill="#e6eef4" stroke="#2a86c8" stroke-width=".4"/></svg>
<div class="abs" style="left:734.89px;top:820.6px;width:1px;height:3.5px;background:#cfcfcf"></div>
<svg class="abs" style="left:729.00px;top:810.80px" width="10.6" height="10.6" viewBox="0 0 10.6 10.6"><rect x="7.75" y="4.15" width="1.7" height="1.7" fill="#3d9fe2"/><rect x="6.70" y="6.70" width="1.7" height="1.7" fill="#3d9fe2"/><rect x="4.15" y="7.75" width="1.7" height="1.7" fill="#3d9fe2"/><rect x="1.60" y="6.70" width="1.7" height="1.7" fill="#3d9fe2"/><rect x="0.55" y="4.15" width="1.7" height="1.7" fill="#3d9fe2"/><rect x="1.60" y="1.60" width="1.7" height="1.7" fill="#3d9fe2"/><rect x="4.15" y="0.55" width="1.7" height="1.7" fill="#3d9fe2"/><rect x="6.70" y="1.60" width="1.7" height="1.7" fill="#3d9fe2"/></svg>
<div class="abs" style="left:749.18px;top:820.6px;width:1px;height:3.5px;background:#cfcfcf"></div>
<svg class="abs" style="left:743.28px;top:810.80px" width="10.6" height="10.6" viewBox="0 0 10.6 10.6"><path d="M.6 4 L4 .8 H8 L9.6 2.6 V7.6 L7.6 9.6 H.6Z" fill="#e4e4e4" stroke="#666" stroke-width=".6"/><path d="M.6 4 L4 .8 L7.6 4.4 L4.2 6.4Z" fill="#3d9fe2" opacity=".85"/><path d="M.6 4 H5 L7.6 6 V9.6" fill="none" stroke="#8a8a8a" stroke-width=".5"/></svg>
<div class="abs" style="left:763.46px;top:820.6px;width:1px;height:3.5px;background:#cfcfcf"></div>
<svg class="abs" style="left:757.56px;top:810.80px" width="10.6" height="10.6" viewBox="0 0 10.6 10.6"><rect x="3.4" y=".6" width="6.2" height="6" fill="#e6e6e6" stroke="#555" stroke-width=".7"/><rect x=".6" y="3.2" width="6.2" height="6.2" fill="#dcdcdc" stroke="#555" stroke-width=".7"/><path d="M6.8 .6 H9.6 V3 H6.8Z" fill="#3d9fe2"/></svg>
<div class="abs" style="left:777.74px;top:820.6px;width:1px;height:3.5px;background:#cfcfcf"></div>
<svg class="abs" style="left:771.84px;top:810.80px" width="10.6" height="10.6" viewBox="0 0 10.6 10.6"><rect x="3.4" y=".6" width="6.2" height="6" fill="#e6e6e6" stroke="#555" stroke-width=".7"/><rect x=".6" y="3.2" width="6.2" height="6.2" fill="#dcdcdc" stroke="#555" stroke-width=".7"/><path d="M6.8 .6 H9.6 V3 H6.8Z" fill="#3d9fe2"/></svg>
<svg class="abs" style="left:779.3px;top:806.6px" width="10" height="20" viewBox="0 0 10 20"><path d="M.8 1.2 Q5 -.4 9.2 1.2 Q8.6 4.2 6 5 H4Z" fill="#5a5a5a"/><rect x="4.4" y="4" width="1.3" height="15" fill="#707070"/></svg>
</body></html>
